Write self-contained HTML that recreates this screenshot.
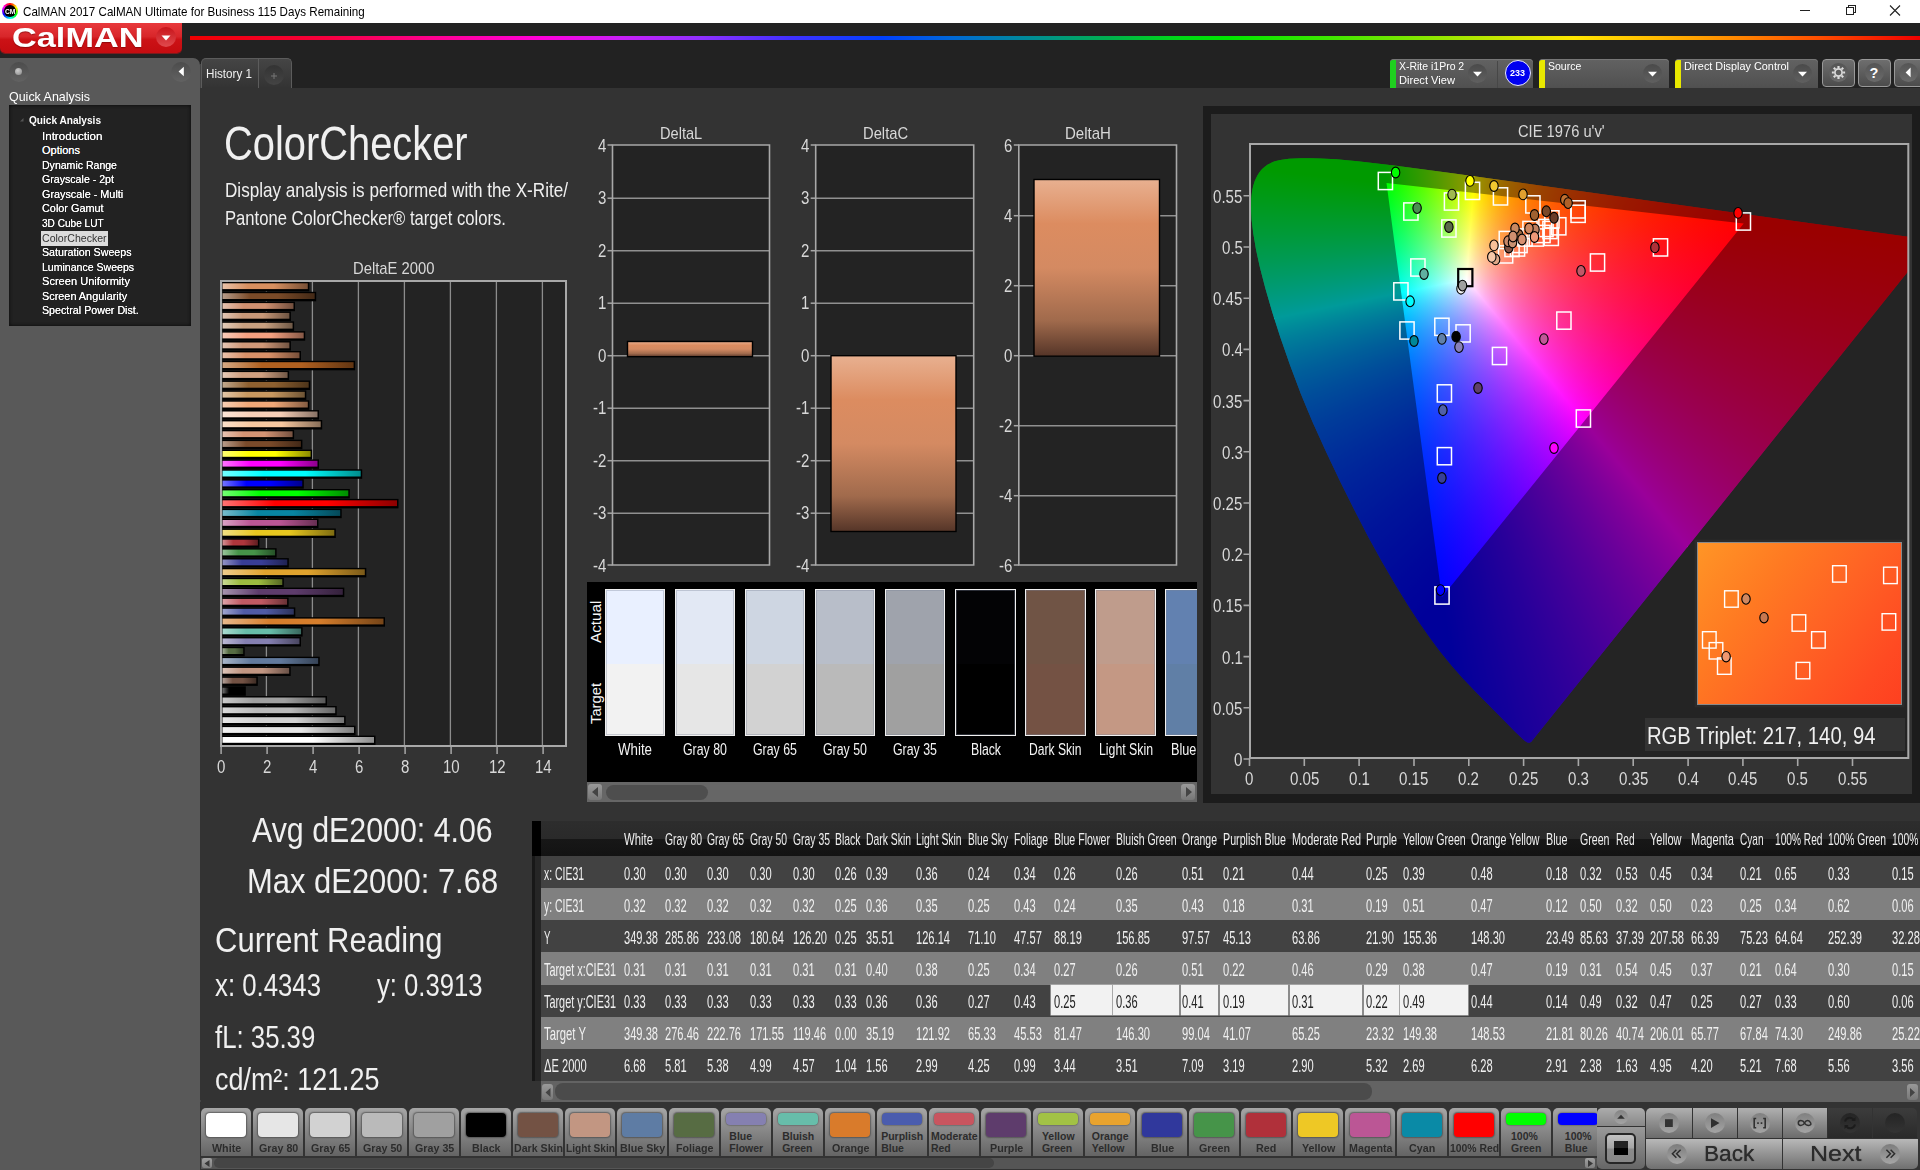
<!DOCTYPE html>
<html><head><meta charset="utf-8"><title>CalMAN</title>
<style>
html,body{margin:0;padding:0}
body{width:1920px;height:1170px;position:relative;overflow:hidden;background:#333;font-family:"Liberation Sans",sans-serif}
.t{position:absolute;white-space:nowrap;line-height:1;transform-origin:0 0}
</style></head><body>
<div style="position:absolute;left:0;top:0;width:1920px;height:23px;background:#fff"></div>
<div style="position:absolute;left:2px;top:3px;width:16px;height:16px;border-radius:50%;background:conic-gradient(from 0deg,#f00,#ff0,#0f0,#0ff,#00f,#f0f,#f00)"></div>
<div style="position:absolute;left:4px;top:5px;width:12px;height:12px;border-radius:50%;background:#000"></div>
<div class="t" style="left:4.9px;top:7.9px;font-size:7px;color:#fff;font-weight:bold;transform:scaleX(0.955);">CM</div>
<div class="t" style="left:23.4px;top:5.6px;font-size:12.4px;color:#000;transform:scaleX(0.937);">CalMAN 2017 CalMAN Ultimate for Business 115 Days Remaining</div>
<svg style="position:absolute;left:1780px;top:0" width="140" height="23"><g stroke="#222" stroke-width="1" fill="none" shape-rendering="crispEdges"><path d="M19.5 10.5H29.5"/><path d="M66.5 7.5H73.5V14.5H66.5Z M68.5 7.5V5.5H75.5V12.5H73.5"/></g><path d="M110 5.5L120 15.5M120 5.5L110 15.5" stroke="#222" stroke-width="1.1" fill="none"/></svg>
<div style="position:absolute;left:0;top:23px;width:1920px;height:65px;background:#222"></div>
<div style="position:absolute;left:190px;top:35.600px;width:1730px;height:4.800px;background:linear-gradient(90deg,#f00000 0%,#f80040 8%,#ff0090 14%,#ff00dc 20.400%,#c820f8 25%,#9030ff 29.500%,#4030ff 34.700%,#0040ff 40%,#0068d8 44%,#009090 49%,#00b050 53%,#00d818 57%,#00e600 60%,#40e800 66%,#90e800 72%,#d8e800 77%,#ffe600 80%,#ffb800 85%,#ff8c00 89%,#ff5000 94%,#f00000 100%);filter:blur(.5px)"></div>
<div style="position:absolute;left:0;top:23px;width:182px;height:29.5px;border-radius:0 0 5px 5px;background:linear-gradient(#e8393c,#d8262a 45%,#cc1216 55%,#c40c10);box-shadow:0 1px 0 #7a1a1c"></div>
<div class="t" style="left:11.8px;top:23.7px;font-size:28px;color:#fff;font-weight:bold;transform:scaleX(1.225);text-shadow:0 1px 1px rgba(90,0,0,.5);">CalMAN</div>
<div style="position:absolute;left:156px;top:27px;width:20px;height:20px;border-radius:50%;background:linear-gradient(#c8141a,#e04a4e)"></div>
<svg style="position:absolute;left:156px;top:27px" width="20" height="20"><path d="M5.5 8.5H14.5L10 13.5Z" fill="#fff"/></svg>
<div style="position:absolute;left:0;top:58px;width:199.5px;height:1112px;background:#595959;border-radius:0 7px 0 0"></div>
<div style="position:absolute;left:199.5px;top:64px;width:1px;height:1106px;background:#444"></div>
<div style="position:absolute;left:9px;top:62px;width:20px;height:20px;border-radius:50%;background:linear-gradient(#4c4c4c,#626262)"></div>
<div style="position:absolute;left:15px;top:68px;width:7px;height:7px;border-radius:50%;background:radial-gradient(circle at 40% 35%,#ccc,#888)"></div>
<div style="position:absolute;left:171px;top:62px;width:20px;height:20px;border-radius:50%;background:linear-gradient(#4c4c4c,#626262)"></div>
<svg style="position:absolute;left:171px;top:62px" width="20" height="20"><path d="M12.8 4.8V14.2L7.6 9.5Z" fill="#fff"/></svg>
<div class="t" style="left:9.0px;top:89.9px;font-size:13px;color:#fff;transform:scaleX(0.958);">Quick Analysis</div>
<div style="position:absolute;left:9px;top:105px;width:182px;height:221px;background:#222;box-shadow:inset 0 0 3px 1px #111"></div>
<svg style="position:absolute;left:18px;top:116px" width="8" height="8"><path d="M5.5 2V5.5H2Z" fill="#555"/></svg>
<div class="t" style="left:29.0px;top:115.1px;font-size:11px;color:#fff;font-weight:bold;transform:scaleX(0.918);">Quick Analysis</div>
<div class="t" style="left:42.0px;top:130.5px;font-size:11px;color:#fff;transform:scaleX(1.051);text-shadow:0 0 .6px #fff;">Introduction</div>
<div class="t" style="left:42.0px;top:145.1px;font-size:11px;color:#fff;text-shadow:0 0 .6px #fff;">Options</div>
<div class="t" style="left:42.0px;top:159.6px;font-size:11px;color:#fff;transform:scaleX(0.958);text-shadow:0 0 .6px #fff;">Dynamic Range</div>
<div class="t" style="left:42.0px;top:174.2px;font-size:11px;color:#fff;transform:scaleX(0.965);text-shadow:0 0 .6px #fff;">Grayscale - 2pt</div>
<div class="t" style="left:42.0px;top:188.8px;font-size:11px;color:#fff;transform:scaleX(0.984);text-shadow:0 0 .6px #fff;">Grayscale - Multi</div>
<div class="t" style="left:42.0px;top:203.4px;font-size:11px;color:#fff;transform:scaleX(0.988);text-shadow:0 0 .6px #fff;">Color Gamut</div>
<div class="t" style="left:42.0px;top:218.0px;font-size:11px;color:#fff;transform:scaleX(0.916);text-shadow:0 0 .6px #fff;">3D Cube LUT</div>
<div style="position:absolute;left:40.5px;top:231.3px;width:67px;height:14.5px;background:#dcdcdc"></div>
<div class="t" style="left:42.0px;top:232.5px;font-size:11px;color:#333;transform:scaleX(0.961);">ColorChecker</div>
<div class="t" style="left:42.0px;top:247.1px;font-size:11px;color:#fff;transform:scaleX(0.970);text-shadow:0 0 .6px #fff;">Saturation Sweeps</div>
<div class="t" style="left:42.0px;top:261.7px;font-size:11px;color:#fff;transform:scaleX(0.959);text-shadow:0 0 .6px #fff;">Luminance Sweeps</div>
<div class="t" style="left:42.0px;top:276.3px;font-size:11px;color:#fff;transform:scaleX(1.006);text-shadow:0 0 .6px #fff;">Screen Uniformity</div>
<div class="t" style="left:42.0px;top:290.9px;font-size:11px;color:#fff;transform:scaleX(0.988);text-shadow:0 0 .6px #fff;">Screen Angularity</div>
<div class="t" style="left:42.0px;top:305.4px;font-size:11px;color:#fff;transform:scaleX(0.971);text-shadow:0 0 .6px #fff;">Spectral Power Dist.</div>
<div style="position:absolute;left:200.5px;top:58px;width:91px;height:30px;border-radius:5px 5px 0 0;background:linear-gradient(#454545,#333);border:1px solid #5c5c5c;border-bottom:none;box-sizing:border-box"></div>
<div style="position:absolute;left:258px;top:59px;width:1px;height:29px;background:#5c5c5c"></div>
<div class="t" style="left:206.4px;top:67.6px;font-size:12px;color:#f0f0f0;transform:scaleX(0.972);">History 1</div>
<div style="position:absolute;left:264px;top:64.5px;width:20px;height:20px;border-radius:50%;background:linear-gradient(#333,#444)"></div>
<svg style="position:absolute;left:264px;top:64.5px" width="20" height="20"><path d="M7 11H13M10 8V14" stroke="#777" stroke-width="1" fill="none"/></svg>
<div style="position:absolute;left:1390.0px;top:58.5px;width:142.5px;height:29.5px;border-radius:4px 4px 0 0;background:linear-gradient(#626262,#505050);box-shadow:inset 0 1px 0 #777"></div>
<div style="position:absolute;left:1390.0px;top:59.5px;width:5.5px;height:28.5px;background:#1fd01f;border-radius:3px 0 0 0"></div>
<div class="t" style="left:1398.6px;top:61.3px;font-size:11px;color:#fff;transform:scaleX(0.952);">X-Rite i1Pro 2</div>
<div class="t" style="left:1398.6px;top:74.9px;font-size:11px;color:#fff;transform:scaleX(1.010);">Direct View</div>
<div style="position:absolute;left:1467.5px;top:63.5px;width:19px;height:19px;border-radius:50%;background:linear-gradient(#4a4a4a,#606060)"></div>
<svg style="position:absolute;left:1467.5px;top:63.5px" width="19" height="19"><path d="M5 7.8H14L9.5 12.6Z" fill="#fff"/></svg>
<div style="position:absolute;left:1496.5px;top:61px;width:1.5px;height:27px;background:#474747"></div>
<div style="position:absolute;left:1504.5px;top:60px;width:26px;height:26px;border-radius:50%;background:#0000f0;border:1.5px solid #e8e8ff;box-sizing:border-box"></div>
<div class="t" style="left:1510.1px;top:68.3px;font-size:9.5px;color:#fff;font-weight:bold;transform:scaleX(0.946);">233</div>
<div style="position:absolute;left:1539.0px;top:58.5px;width:130.0px;height:29.5px;border-radius:4px 4px 0 0;background:linear-gradient(#626262,#505050);box-shadow:inset 0 1px 0 #777"></div>
<div style="position:absolute;left:1539.0px;top:59.5px;width:5.5px;height:28.5px;background:#e8e800;border-radius:3px 0 0 0"></div>
<div class="t" style="left:1547.6px;top:61.3px;font-size:11px;color:#fff;transform:scaleX(0.955);">Source</div>
<div style="position:absolute;left:1642.5px;top:63.5px;width:19px;height:19px;border-radius:50%;background:linear-gradient(#4a4a4a,#606060)"></div>
<svg style="position:absolute;left:1642.5px;top:63.5px" width="19" height="19"><path d="M5 7.8H14L9.5 12.6Z" fill="#fff"/></svg>
<div style="position:absolute;left:1675.0px;top:58.5px;width:143.0px;height:29.5px;border-radius:4px 4px 0 0;background:linear-gradient(#626262,#505050);box-shadow:inset 0 1px 0 #777"></div>
<div style="position:absolute;left:1675.0px;top:59.5px;width:5.5px;height:28.5px;background:#e8e800;border-radius:3px 0 0 0"></div>
<div class="t" style="left:1683.6px;top:61.3px;font-size:11px;color:#fff;transform:scaleX(0.987);">Direct Display Control</div>
<div style="position:absolute;left:1792.5px;top:63.5px;width:19px;height:19px;border-radius:50%;background:linear-gradient(#4a4a4a,#606060)"></div>
<svg style="position:absolute;left:1792.5px;top:63.5px" width="19" height="19"><path d="M5 7.8H14L9.5 12.6Z" fill="#fff"/></svg>
<div style="position:absolute;left:1821.5px;top:58.5px;width:33px;height:28px;border-radius:4px;background:linear-gradient(#6e6e6e,#4c4c4c);border:1px solid #999;box-sizing:border-box"></div>
<div style="position:absolute;left:1828.5px;top:63px;width:19px;height:19px;border-radius:50%;background:linear-gradient(#555,#6a6a6a)"></div>
<div style="position:absolute;left:1857.5px;top:58.5px;width:33px;height:28px;border-radius:4px;background:linear-gradient(#6e6e6e,#4c4c4c);border:1px solid #999;box-sizing:border-box"></div>
<div style="position:absolute;left:1864.5px;top:63px;width:19px;height:19px;border-radius:50%;background:linear-gradient(#555,#6a6a6a)"></div>
<div style="position:absolute;left:1893.5px;top:58.5px;width:33px;height:28px;border-radius:4px;background:linear-gradient(#6e6e6e,#4c4c4c);border:1px solid #999;box-sizing:border-box"></div>
<div style="position:absolute;left:1898.5px;top:63px;width:19px;height:19px;border-radius:50%;background:linear-gradient(#555,#6a6a6a)"></div>
<svg style="position:absolute;left:1828.5px;top:63px" width="19" height="19" viewBox="-9.5 -9.5 19 19"><g fill="none" stroke="#ddd"><circle r="3.6" stroke-width="1.7"/><g stroke-width="2.2"><path d="M0 -4.6V-6.6M0 4.6V6.6M-4.6 0H-6.6M4.6 0H6.6M3.25 3.25L4.7 4.7M-3.25 3.25L-4.7 4.7M3.25 -3.25L4.7 -4.7M-3.25 -3.25L-4.7 -4.7"/></g></g></svg>
<div class="t" style="left:1869.6px;top:65.7px;font-size:14.5px;color:#fff;font-weight:bold;">?</div>
<svg style="position:absolute;left:1898.5px;top:63px" width="19" height="19"><path d="M11.6 4.6V14.2L6.6 9.4Z" fill="#fff"/></svg>
<div style="position:absolute;left:200px;top:88px;width:1720px;height:1012px;background:#333"></div>
<div class="t" style="left:224.3px;top:120.2px;font-size:47.5px;color:#f0f0f0;transform:scaleX(0.839);">ColorChecker</div>
<div class="t" style="left:225.0px;top:179.3px;font-size:21px;color:#f0f0f0;transform:scaleX(0.814);">Display analysis is performed with the X-Rite/</div>
<div class="t" style="left:225.0px;top:207.4px;font-size:21px;color:#f0f0f0;transform:scaleX(0.791);">Pantone ColorChecker® target colors.</div>
<div class="t" style="left:353.2px;top:260.3px;font-size:17px;color:#d8d8d8;transform:scaleX(0.871);">DeltaE 2000</div>
<div style="position:absolute;left:221px;top:281px;width:346px;height:465px;background:#232323"></div>
<svg style="position:absolute;left:200px;top:270px" width="400" height="490">
<defs>
<linearGradient id="g0"><stop offset="0" stop-color="rgb(255,255,255)"/><stop offset=".3" stop-color="rgb(255,255,255)"/><stop offset=".6" stop-color="rgb(255,255,255)"/><stop offset="1" stop-color="rgb(140,140,140)"/></linearGradient>
<linearGradient id="g1"><stop offset="0" stop-color="rgb(241,241,241)"/><stop offset=".3" stop-color="rgb(230,230,230)"/><stop offset=".6" stop-color="rgb(230,230,230)"/><stop offset="1" stop-color="rgb(126,126,126)"/></linearGradient>
<linearGradient id="g2"><stop offset="0" stop-color="rgb(230,230,230)"/><stop offset=".3" stop-color="rgb(210,210,210)"/><stop offset=".6" stop-color="rgb(210,210,210)"/><stop offset="1" stop-color="rgb(116,116,116)"/></linearGradient>
<linearGradient id="g3"><stop offset="0" stop-color="rgb(217,217,217)"/><stop offset=".3" stop-color="rgb(186,186,186)"/><stop offset=".6" stop-color="rgb(186,186,186)"/><stop offset="1" stop-color="rgb(102,102,102)"/></linearGradient>
<linearGradient id="g4"><stop offset="0" stop-color="rgb(203,203,203)"/><stop offset=".3" stop-color="rgb(160,160,160)"/><stop offset=".6" stop-color="rgb(160,160,160)"/><stop offset="1" stop-color="rgb(88,88,88)"/></linearGradient>
<linearGradient id="g5"><stop offset="0" stop-color="rgb(115,115,115)"/><stop offset=".3" stop-color="rgb(0,0,0)"/><stop offset=".6" stop-color="rgb(0,0,0)"/><stop offset="1" stop-color="rgb(0,0,0)"/></linearGradient>
<linearGradient id="g6"><stop offset="0" stop-color="rgb(178,160,152)"/><stop offset=".3" stop-color="rgb(115,82,68)"/><stop offset=".6" stop-color="rgb(115,82,68)"/><stop offset="1" stop-color="rgb(63,45,37)"/></linearGradient>
<linearGradient id="g7"><stop offset="0" stop-color="rgb(221,197,186)"/><stop offset=".3" stop-color="rgb(194,150,130)"/><stop offset=".6" stop-color="rgb(194,150,130)"/><stop offset="1" stop-color="rgb(107,82,72)"/></linearGradient>
<linearGradient id="g8"><stop offset="0" stop-color="rgb(169,182,201)"/><stop offset=".3" stop-color="rgb(98,122,157)"/><stop offset=".6" stop-color="rgb(98,122,157)"/><stop offset="1" stop-color="rgb(54,67,86)"/></linearGradient>
<linearGradient id="g9"><stop offset="0" stop-color="rgb(163,174,152)"/><stop offset=".3" stop-color="rgb(87,108,67)"/><stop offset=".6" stop-color="rgb(87,108,67)"/><stop offset="1" stop-color="rgb(48,59,37)"/></linearGradient>
<linearGradient id="g10"><stop offset="0" stop-color="rgb(188,185,212)"/><stop offset=".3" stop-color="rgb(133,128,177)"/><stop offset=".6" stop-color="rgb(133,128,177)"/><stop offset="1" stop-color="rgb(73,70,97)"/></linearGradient>
<linearGradient id="g11"><stop offset="0" stop-color="rgb(171,219,208)"/><stop offset=".3" stop-color="rgb(103,189,170)"/><stop offset=".6" stop-color="rgb(103,189,170)"/><stop offset="1" stop-color="rgb(57,104,94)"/></linearGradient>
<linearGradient id="g12"><stop offset="0" stop-color="rgb(232,184,139)"/><stop offset=".3" stop-color="rgb(214,126,44)"/><stop offset=".6" stop-color="rgb(214,126,44)"/><stop offset="1" stop-color="rgb(118,69,24)"/></linearGradient>
<linearGradient id="g13"><stop offset="0" stop-color="rgb(159,165,206)"/><stop offset=".3" stop-color="rgb(80,91,166)"/><stop offset=".6" stop-color="rgb(80,91,166)"/><stop offset="1" stop-color="rgb(44,50,91)"/></linearGradient>
<linearGradient id="g14"><stop offset="0" stop-color="rgb(221,164,169)"/><stop offset=".3" stop-color="rgb(193,90,99)"/><stop offset=".6" stop-color="rgb(193,90,99)"/><stop offset="1" stop-color="rgb(106,50,54)"/></linearGradient>
<linearGradient id="g15"><stop offset="0" stop-color="rgb(166,148,174)"/><stop offset=".3" stop-color="rgb(94,60,108)"/><stop offset=".6" stop-color="rgb(94,60,108)"/><stop offset="1" stop-color="rgb(52,33,59)"/></linearGradient>
<linearGradient id="g16"><stop offset="0" stop-color="rgb(201,218,150)"/><stop offset=".3" stop-color="rgb(157,188,64)"/><stop offset=".6" stop-color="rgb(157,188,64)"/><stop offset="1" stop-color="rgb(86,103,35)"/></linearGradient>
<linearGradient id="g17"><stop offset="0" stop-color="rgb(238,204,140)"/><stop offset=".3" stop-color="rgb(224,163,46)"/><stop offset=".6" stop-color="rgb(224,163,46)"/><stop offset="1" stop-color="rgb(123,90,25)"/></linearGradient>
<linearGradient id="g18"><stop offset="0" stop-color="rgb(146,148,197)"/><stop offset=".3" stop-color="rgb(56,61,150)"/><stop offset=".6" stop-color="rgb(56,61,150)"/><stop offset="1" stop-color="rgb(31,34,82)"/></linearGradient>
<linearGradient id="g19"><stop offset="0" stop-color="rgb(153,196,155)"/><stop offset=".3" stop-color="rgb(70,148,73)"/><stop offset=".6" stop-color="rgb(70,148,73)"/><stop offset="1" stop-color="rgb(38,81,40)"/></linearGradient>
<linearGradient id="g20"><stop offset="0" stop-color="rgb(211,144,148)"/><stop offset=".3" stop-color="rgb(175,54,60)"/><stop offset=".6" stop-color="rgb(175,54,60)"/><stop offset="1" stop-color="rgb(96,30,33)"/></linearGradient>
<linearGradient id="g21"><stop offset="0" stop-color="rgb(242,224,132)"/><stop offset=".3" stop-color="rgb(231,199,31)"/><stop offset=".6" stop-color="rgb(231,199,31)"/><stop offset="1" stop-color="rgb(127,109,17)"/></linearGradient>
<linearGradient id="g22"><stop offset="0" stop-color="rgb(218,162,197)"/><stop offset=".3" stop-color="rgb(187,86,149)"/><stop offset=".6" stop-color="rgb(187,86,149)"/><stop offset="1" stop-color="rgb(103,47,82)"/></linearGradient>
<linearGradient id="g23"><stop offset="0" stop-color="rgb(119,188,203)"/><stop offset=".3" stop-color="rgb(8,133,161)"/><stop offset=".6" stop-color="rgb(8,133,161)"/><stop offset="1" stop-color="rgb(4,73,89)"/></linearGradient>
<linearGradient id="g24"><stop offset="0" stop-color="rgb(255,115,115)"/><stop offset=".3" stop-color="rgb(255,0,0)"/><stop offset=".6" stop-color="rgb(255,0,0)"/><stop offset="1" stop-color="rgb(140,0,0)"/></linearGradient>
<linearGradient id="g25"><stop offset="0" stop-color="rgb(115,255,115)"/><stop offset=".3" stop-color="rgb(0,255,0)"/><stop offset=".6" stop-color="rgb(0,255,0)"/><stop offset="1" stop-color="rgb(0,140,0)"/></linearGradient>
<linearGradient id="g26"><stop offset="0" stop-color="rgb(115,115,255)"/><stop offset=".3" stop-color="rgb(0,0,255)"/><stop offset=".6" stop-color="rgb(0,0,255)"/><stop offset="1" stop-color="rgb(0,0,140)"/></linearGradient>
<linearGradient id="g27"><stop offset="0" stop-color="rgb(115,255,255)"/><stop offset=".3" stop-color="rgb(0,255,255)"/><stop offset=".6" stop-color="rgb(0,255,255)"/><stop offset="1" stop-color="rgb(0,140,140)"/></linearGradient>
<linearGradient id="g28"><stop offset="0" stop-color="rgb(255,115,255)"/><stop offset=".3" stop-color="rgb(255,0,255)"/><stop offset=".6" stop-color="rgb(255,0,255)"/><stop offset="1" stop-color="rgb(140,0,140)"/></linearGradient>
<linearGradient id="g29"><stop offset="0" stop-color="rgb(255,255,115)"/><stop offset=".3" stop-color="rgb(255,255,0)"/><stop offset=".6" stop-color="rgb(255,255,0)"/><stop offset="1" stop-color="rgb(140,140,0)"/></linearGradient>
<linearGradient id="g30"><stop offset="0" stop-color="rgb(182,155,138)"/><stop offset=".3" stop-color="rgb(122,74,42)"/><stop offset=".6" stop-color="rgb(122,74,42)"/><stop offset="1" stop-color="rgb(67,41,23)"/></linearGradient>
<linearGradient id="g31"><stop offset="0" stop-color="rgb(231,196,179)"/><stop offset=".3" stop-color="rgb(212,148,116)"/><stop offset=".6" stop-color="rgb(212,148,116)"/><stop offset="1" stop-color="rgb(117,81,64)"/></linearGradient>
<linearGradient id="g32"><stop offset="0" stop-color="rgb(251,225,203)"/><stop offset=".3" stop-color="rgb(248,200,160)"/><stop offset=".6" stop-color="rgb(248,200,160)"/><stop offset="1" stop-color="rgb(136,110,88)"/></linearGradient>
<linearGradient id="g33"><stop offset="0" stop-color="rgb(251,229,216)"/><stop offset=".3" stop-color="rgb(248,208,184)"/><stop offset=".6" stop-color="rgb(248,208,184)"/><stop offset="1" stop-color="rgb(136,114,101)"/></linearGradient>
<linearGradient id="g34"><stop offset="0" stop-color="rgb(247,207,181)"/><stop offset=".3" stop-color="rgb(240,168,120)"/><stop offset=".6" stop-color="rgb(240,168,120)"/><stop offset="1" stop-color="rgb(132,92,66)"/></linearGradient>
<linearGradient id="g35"><stop offset="0" stop-color="rgb(225,198,168)"/><stop offset=".3" stop-color="rgb(200,152,96)"/><stop offset=".6" stop-color="rgb(200,152,96)"/><stop offset="1" stop-color="rgb(110,84,53)"/></linearGradient>
<linearGradient id="g36"><stop offset="0" stop-color="rgb(193,168,141)"/><stop offset=".3" stop-color="rgb(142,96,48)"/><stop offset=".6" stop-color="rgb(142,96,48)"/><stop offset="1" stop-color="rgb(78,53,26)"/></linearGradient>
<linearGradient id="g37"><stop offset="0" stop-color="rgb(229,203,185)"/><stop offset=".3" stop-color="rgb(208,160,128)"/><stop offset=".6" stop-color="rgb(208,160,128)"/><stop offset="1" stop-color="rgb(114,88,70)"/></linearGradient>
<linearGradient id="g38"><stop offset="0" stop-color="rgb(212,168,132)"/><stop offset=".3" stop-color="rgb(176,96,32)"/><stop offset=".6" stop-color="rgb(176,96,32)"/><stop offset="1" stop-color="rgb(97,53,18)"/></linearGradient>
<linearGradient id="g39"><stop offset="0" stop-color="rgb(234,194,172)"/><stop offset=".3" stop-color="rgb(216,144,104)"/><stop offset=".6" stop-color="rgb(216,144,104)"/><stop offset="1" stop-color="rgb(119,79,57)"/></linearGradient>
<linearGradient id="g40"><stop offset="0" stop-color="rgb(229,198,181)"/><stop offset=".3" stop-color="rgb(208,152,120)"/><stop offset=".6" stop-color="rgb(208,152,120)"/><stop offset="1" stop-color="rgb(114,84,66)"/></linearGradient>
<linearGradient id="g41"><stop offset="0" stop-color="rgb(249,203,185)"/><stop offset=".3" stop-color="rgb(244,160,128)"/><stop offset=".6" stop-color="rgb(244,160,128)"/><stop offset="1" stop-color="rgb(134,88,70)"/></linearGradient>
<linearGradient id="g42"><stop offset="0" stop-color="rgb(225,203,185)"/><stop offset=".3" stop-color="rgb(200,160,128)"/><stop offset=".6" stop-color="rgb(200,160,128)"/><stop offset="1" stop-color="rgb(110,88,70)"/></linearGradient>
<linearGradient id="g43"><stop offset="0" stop-color="rgb(225,198,181)"/><stop offset=".3" stop-color="rgb(200,152,120)"/><stop offset=".6" stop-color="rgb(200,152,120)"/><stop offset="1" stop-color="rgb(110,84,66)"/></linearGradient>
<linearGradient id="g44"><stop offset="0" stop-color="rgb(229,194,176)"/><stop offset=".3" stop-color="rgb(208,144,112)"/><stop offset=".6" stop-color="rgb(208,144,112)"/><stop offset="1" stop-color="rgb(114,79,62)"/></linearGradient>
<linearGradient id="g45"><stop offset="0" stop-color="rgb(182,155,137)"/><stop offset=".3" stop-color="rgb(122,74,40)"/><stop offset=".6" stop-color="rgb(122,74,40)"/><stop offset="1" stop-color="rgb(67,41,22)"/></linearGradient>
<linearGradient id="g46"><stop offset="0" stop-color="rgb(234,194,168)"/><stop offset=".3" stop-color="rgb(216,144,96)"/><stop offset=".6" stop-color="rgb(216,144,96)"/><stop offset="1" stop-color="rgb(119,79,53)"/></linearGradient>
</defs>
<path d="M66.4 11 V476" stroke="#8c8c8c" stroke-width="1.3"/>
<path d="M112.4 11 V476" stroke="#8c8c8c" stroke-width="1.3"/>
<path d="M158.4 11 V476" stroke="#8c8c8c" stroke-width="1.3"/>
<path d="M204.4 11 V476" stroke="#8c8c8c" stroke-width="1.3"/>
<path d="M250.4 11 V476" stroke="#8c8c8c" stroke-width="1.3"/>
<path d="M296.4 11 V476" stroke="#8c8c8c" stroke-width="1.3"/>
<path d="M342.4 11 V476" stroke="#8c8c8c" stroke-width="1.3"/>
<rect x="22.5" y="465.6" width="153.0" height="9.5" fill="#000"/>
<rect x="22.5" y="467.0" width="151.5" height="5.8" fill="url(#g0)"/>
<rect x="22.5" y="455.7" width="133.0" height="9.5" fill="#000"/>
<rect x="22.5" y="457.1" width="131.5" height="5.8" fill="url(#g1)"/>
<rect x="22.5" y="445.8" width="123.1" height="9.5" fill="#000"/>
<rect x="22.5" y="447.2" width="121.6" height="5.8" fill="url(#g2)"/>
<rect x="22.5" y="436.0" width="114.2" height="9.5" fill="#000"/>
<rect x="22.5" y="437.4" width="112.7" height="5.8" fill="url(#g3)"/>
<rect x="22.5" y="426.1" width="104.5" height="9.5" fill="#000"/>
<rect x="22.5" y="427.5" width="103.0" height="5.8" fill="url(#g4)"/>
<rect x="22.5" y="416.3" width="23.3" height="9.5" fill="#000"/>
<rect x="22.5" y="417.7" width="21.8" height="5.8" fill="url(#g5)"/>
<rect x="22.5" y="406.4" width="35.3" height="9.5" fill="#000"/>
<rect x="22.5" y="407.8" width="33.8" height="5.8" fill="url(#g6)"/>
<rect x="22.5" y="396.5" width="68.2" height="9.5" fill="#000"/>
<rect x="22.5" y="397.9" width="66.7" height="5.8" fill="url(#g7)"/>
<rect x="22.5" y="386.7" width="97.2" height="9.5" fill="#000"/>
<rect x="22.5" y="388.1" width="95.7" height="5.8" fill="url(#g8)"/>
<rect x="22.5" y="376.8" width="22.2" height="9.5" fill="#000"/>
<rect x="22.5" y="378.2" width="20.7" height="5.8" fill="url(#g9)"/>
<rect x="22.5" y="367.0" width="78.5" height="9.5" fill="#000"/>
<rect x="22.5" y="368.4" width="77.0" height="5.8" fill="url(#g10)"/>
<rect x="22.5" y="357.1" width="80.1" height="9.5" fill="#000"/>
<rect x="22.5" y="358.5" width="78.6" height="5.8" fill="url(#g11)"/>
<rect x="22.5" y="347.2" width="162.5" height="9.5" fill="#000"/>
<rect x="22.5" y="348.6" width="161.0" height="5.8" fill="url(#g12)"/>
<rect x="22.5" y="337.4" width="72.8" height="9.5" fill="#000"/>
<rect x="22.5" y="338.8" width="71.3" height="5.8" fill="url(#g13)"/>
<rect x="22.5" y="327.5" width="66.1" height="9.5" fill="#000"/>
<rect x="22.5" y="328.9" width="64.6" height="5.8" fill="url(#g14)"/>
<rect x="22.5" y="317.6" width="121.8" height="9.5" fill="#000"/>
<rect x="22.5" y="319.0" width="120.3" height="5.8" fill="url(#g15)"/>
<rect x="22.5" y="307.8" width="61.3" height="9.5" fill="#000"/>
<rect x="22.5" y="309.2" width="59.8" height="5.8" fill="url(#g16)"/>
<rect x="22.5" y="297.9" width="143.8" height="9.5" fill="#000"/>
<rect x="22.5" y="299.3" width="142.3" height="5.8" fill="url(#g17)"/>
<rect x="22.5" y="288.1" width="66.3" height="9.5" fill="#000"/>
<rect x="22.5" y="289.5" width="64.8" height="5.8" fill="url(#g18)"/>
<rect x="22.5" y="278.2" width="54.1" height="9.5" fill="#000"/>
<rect x="22.5" y="279.6" width="52.6" height="5.8" fill="url(#g19)"/>
<rect x="22.5" y="268.3" width="36.9" height="9.5" fill="#000"/>
<rect x="22.5" y="269.7" width="35.4" height="5.8" fill="url(#g20)"/>
<rect x="22.5" y="258.5" width="113.3" height="9.5" fill="#000"/>
<rect x="22.5" y="259.9" width="111.8" height="5.8" fill="url(#g21)"/>
<rect x="22.5" y="248.6" width="96.0" height="9.5" fill="#000"/>
<rect x="22.5" y="250.0" width="94.5" height="5.8" fill="url(#g22)"/>
<rect x="22.5" y="238.7" width="119.2" height="9.5" fill="#000"/>
<rect x="22.5" y="240.1" width="117.7" height="5.8" fill="url(#g23)"/>
<rect x="22.5" y="228.9" width="176.0" height="9.5" fill="#000"/>
<rect x="22.5" y="230.3" width="174.5" height="5.8" fill="url(#g24)"/>
<rect x="22.5" y="219.0" width="127.3" height="9.5" fill="#000"/>
<rect x="22.5" y="220.4" width="125.8" height="5.8" fill="url(#g25)"/>
<rect x="22.5" y="209.2" width="81.3" height="9.5" fill="#000"/>
<rect x="22.5" y="210.6" width="79.8" height="5.8" fill="url(#g26)"/>
<rect x="22.5" y="199.3" width="139.7" height="9.5" fill="#000"/>
<rect x="22.5" y="200.7" width="138.2" height="5.8" fill="url(#g27)"/>
<rect x="22.5" y="189.4" width="96.5" height="9.5" fill="#000"/>
<rect x="22.5" y="190.8" width="95.0" height="5.8" fill="url(#g28)"/>
<rect x="22.5" y="179.6" width="89.6" height="9.5" fill="#000"/>
<rect x="22.5" y="181.0" width="88.1" height="5.8" fill="url(#g29)"/>
<rect x="22.5" y="169.7" width="79.9" height="9.5" fill="#000"/>
<rect x="22.5" y="171.1" width="78.4" height="5.8" fill="url(#g30)"/>
<rect x="22.5" y="159.9" width="71.6" height="9.5" fill="#000"/>
<rect x="22.5" y="161.3" width="70.1" height="5.8" fill="url(#g31)"/>
<rect x="22.5" y="150.0" width="99.7" height="9.5" fill="#000"/>
<rect x="22.5" y="151.4" width="98.2" height="5.8" fill="url(#g32)"/>
<rect x="22.5" y="140.1" width="96.5" height="9.5" fill="#000"/>
<rect x="22.5" y="141.5" width="95.0" height="5.8" fill="url(#g33)"/>
<rect x="22.5" y="130.3" width="86.8" height="9.5" fill="#000"/>
<rect x="22.5" y="131.7" width="85.3" height="5.8" fill="url(#g34)"/>
<rect x="22.5" y="120.4" width="83.8" height="9.5" fill="#000"/>
<rect x="22.5" y="121.8" width="82.3" height="5.8" fill="url(#g35)"/>
<rect x="22.5" y="110.5" width="87.7" height="9.5" fill="#000"/>
<rect x="22.5" y="111.9" width="86.2" height="5.8" fill="url(#g36)"/>
<rect x="22.5" y="100.7" width="66.6" height="9.5" fill="#000"/>
<rect x="22.5" y="102.1" width="65.1" height="5.8" fill="url(#g37)"/>
<rect x="22.5" y="90.8" width="132.6" height="9.5" fill="#000"/>
<rect x="22.5" y="92.2" width="131.1" height="5.8" fill="url(#g38)"/>
<rect x="22.5" y="81.0" width="78.5" height="9.5" fill="#000"/>
<rect x="22.5" y="82.4" width="77.0" height="5.8" fill="url(#g39)"/>
<rect x="22.5" y="71.1" width="68.4" height="9.5" fill="#000"/>
<rect x="22.5" y="72.5" width="66.9" height="5.8" fill="url(#g40)"/>
<rect x="22.5" y="61.2" width="82.7" height="9.5" fill="#000"/>
<rect x="22.5" y="62.6" width="81.2" height="5.8" fill="url(#g41)"/>
<rect x="22.5" y="51.4" width="71.6" height="9.5" fill="#000"/>
<rect x="22.5" y="52.8" width="70.1" height="5.8" fill="url(#g42)"/>
<rect x="22.5" y="41.5" width="68.4" height="9.5" fill="#000"/>
<rect x="22.5" y="42.9" width="66.9" height="5.8" fill="url(#g43)"/>
<rect x="22.5" y="31.7" width="72.5" height="9.5" fill="#000"/>
<rect x="22.5" y="33.1" width="71.0" height="5.8" fill="url(#g44)"/>
<rect x="22.5" y="21.8" width="93.7" height="9.5" fill="#000"/>
<rect x="22.5" y="23.2" width="92.2" height="5.8" fill="url(#g45)"/>
<rect x="22.5" y="11.9" width="86.8" height="9.5" fill="#000"/>
<rect x="22.5" y="13.3" width="85.3" height="5.8" fill="url(#g46)"/>
<path d="M21 11H366V476H21Z" fill="none" stroke="#a8a8a8" stroke-width="2"/>
<path d="M21.1 476 v8" stroke="#a8a8a8" stroke-width="1.5"/>
<path d="M67.1 476 v8" stroke="#a8a8a8" stroke-width="1.5"/>
<path d="M113.1 476 v8" stroke="#a8a8a8" stroke-width="1.5"/>
<path d="M159.1 476 v8" stroke="#a8a8a8" stroke-width="1.5"/>
<path d="M205.1 476 v8" stroke="#a8a8a8" stroke-width="1.5"/>
<path d="M251.1 476 v8" stroke="#a8a8a8" stroke-width="1.5"/>
<path d="M297.1 476 v8" stroke="#a8a8a8" stroke-width="1.5"/>
<path d="M343.1 476 v8" stroke="#a8a8a8" stroke-width="1.5"/>
</svg>
<div class="t" style="left:216.8px;top:757.9px;font-size:18px;color:#d8d8d8;transform:scaleX(0.835);">0</div>
<div class="t" style="left:262.8px;top:757.9px;font-size:18px;color:#d8d8d8;transform:scaleX(0.835);">2</div>
<div class="t" style="left:308.8px;top:757.9px;font-size:18px;color:#d8d8d8;transform:scaleX(0.835);">4</div>
<div class="t" style="left:354.8px;top:757.9px;font-size:18px;color:#d8d8d8;transform:scaleX(0.835);">6</div>
<div class="t" style="left:400.8px;top:757.9px;font-size:18px;color:#d8d8d8;transform:scaleX(0.835);">8</div>
<div class="t" style="left:442.6px;top:757.9px;font-size:18px;color:#d8d8d8;transform:scaleX(0.835);">10</div>
<div class="t" style="left:488.6px;top:757.9px;font-size:18px;color:#d8d8d8;transform:scaleX(0.835);">12</div>
<div class="t" style="left:534.6px;top:757.9px;font-size:18px;color:#d8d8d8;transform:scaleX(0.835);">14</div>
<div class="t" style="left:660.3px;top:124.6px;font-size:17px;color:#d8d8d8;transform:scaleX(0.859);">DeltaL</div>
<div style="position:absolute;left:612.5px;top:145px;width:157.0px;height:420px;background:#232323"></div>
<svg style="position:absolute;left:582px;top:130px" width="200" height="450">
<path d="M25.5 15.0h5" stroke="#a8a8a8" stroke-width="1.5"/>
<path d="M30.5 68.2H187.5" stroke="#909090" stroke-width="1.5"/>
<path d="M25.5 68.2h5" stroke="#a8a8a8" stroke-width="1.5"/>
<path d="M30.5 120.7H187.5" stroke="#909090" stroke-width="1.5"/>
<path d="M25.5 120.7h5" stroke="#a8a8a8" stroke-width="1.5"/>
<path d="M30.5 173.2H187.5" stroke="#909090" stroke-width="1.5"/>
<path d="M25.5 173.2h5" stroke="#a8a8a8" stroke-width="1.5"/>
<path d="M30.5 225.7H187.5" stroke="#909090" stroke-width="1.5"/>
<path d="M25.5 225.7h5" stroke="#a8a8a8" stroke-width="1.5"/>
<path d="M30.5 278.2H187.5" stroke="#909090" stroke-width="1.5"/>
<path d="M25.5 278.2h5" stroke="#a8a8a8" stroke-width="1.5"/>
<path d="M30.5 330.7H187.5" stroke="#909090" stroke-width="1.5"/>
<path d="M25.5 330.7h5" stroke="#a8a8a8" stroke-width="1.5"/>
<path d="M30.5 383.2H187.5" stroke="#909090" stroke-width="1.5"/>
<path d="M25.5 383.2h5" stroke="#a8a8a8" stroke-width="1.5"/>
<path d="M25.5 435.0h5" stroke="#a8a8a8" stroke-width="1.5"/>
<path d="M30.5 15H187.5V435H30.5Z" fill="none" stroke="#a8a8a8" stroke-width="1.6"/>
<defs><linearGradient id="dgDeltaL" x1="0" y1="0" x2="0" y2="1"><stop offset="0" stop-color="#e8b090"/><stop offset=".25" stop-color="#dc8c60"/><stop offset=".5" stop-color="#d48a62"/><stop offset=".8" stop-color="#a06a4c"/><stop offset="1" stop-color="#553528"/></linearGradient></defs>
<rect x="45.5" y="211.5" width="125.0" height="15.2" fill="url(#dgDeltaL)" stroke="#000" stroke-width="1.4"/>
</svg>
<div class="t" style="left:598.0px;top:136.7px;font-size:18px;color:#d8d8d8;transform:scaleX(0.835);">4</div>
<div class="t" style="left:598.0px;top:189.2px;font-size:18px;color:#d8d8d8;transform:scaleX(0.835);">3</div>
<div class="t" style="left:598.0px;top:241.7px;font-size:18px;color:#d8d8d8;transform:scaleX(0.835);">2</div>
<div class="t" style="left:598.0px;top:294.2px;font-size:18px;color:#d8d8d8;transform:scaleX(0.835);">1</div>
<div class="t" style="left:598.0px;top:346.7px;font-size:18px;color:#d8d8d8;transform:scaleX(0.835);">0</div>
<div class="t" style="left:593.0px;top:399.2px;font-size:18px;color:#d8d8d8;transform:scaleX(0.835);">-1</div>
<div class="t" style="left:593.0px;top:451.7px;font-size:18px;color:#d8d8d8;transform:scaleX(0.835);">-2</div>
<div class="t" style="left:593.0px;top:504.2px;font-size:18px;color:#d8d8d8;transform:scaleX(0.835);">-3</div>
<div class="t" style="left:593.0px;top:556.7px;font-size:18px;color:#d8d8d8;transform:scaleX(0.835);">-4</div>
<div class="t" style="left:862.5px;top:124.6px;font-size:17px;color:#d8d8d8;transform:scaleX(0.868);">DeltaC</div>
<div style="position:absolute;left:815.7px;top:145px;width:158.0px;height:420px;background:#232323"></div>
<svg style="position:absolute;left:785px;top:130px" width="200" height="450">
<path d="M25.7 15.0h5" stroke="#a8a8a8" stroke-width="1.5"/>
<path d="M30.7 68.2H188.7" stroke="#909090" stroke-width="1.5"/>
<path d="M25.7 68.2h5" stroke="#a8a8a8" stroke-width="1.5"/>
<path d="M30.7 120.7H188.7" stroke="#909090" stroke-width="1.5"/>
<path d="M25.7 120.7h5" stroke="#a8a8a8" stroke-width="1.5"/>
<path d="M30.7 173.2H188.7" stroke="#909090" stroke-width="1.5"/>
<path d="M25.7 173.2h5" stroke="#a8a8a8" stroke-width="1.5"/>
<path d="M30.7 225.7H188.7" stroke="#909090" stroke-width="1.5"/>
<path d="M25.7 225.7h5" stroke="#a8a8a8" stroke-width="1.5"/>
<path d="M30.7 278.2H188.7" stroke="#909090" stroke-width="1.5"/>
<path d="M25.7 278.2h5" stroke="#a8a8a8" stroke-width="1.5"/>
<path d="M30.7 330.7H188.7" stroke="#909090" stroke-width="1.5"/>
<path d="M25.7 330.7h5" stroke="#a8a8a8" stroke-width="1.5"/>
<path d="M30.7 383.2H188.7" stroke="#909090" stroke-width="1.5"/>
<path d="M25.7 383.2h5" stroke="#a8a8a8" stroke-width="1.5"/>
<path d="M25.7 435.0h5" stroke="#a8a8a8" stroke-width="1.5"/>
<path d="M30.7 15H188.7V435H30.7Z" fill="none" stroke="#a8a8a8" stroke-width="1.6"/>
<defs><linearGradient id="dgDeltaC" x1="0" y1="0" x2="0" y2="1"><stop offset="0" stop-color="#e8b090"/><stop offset=".25" stop-color="#dc8c60"/><stop offset=".5" stop-color="#d48a62"/><stop offset=".8" stop-color="#a06a4c"/><stop offset="1" stop-color="#553528"/></linearGradient></defs>
<rect x="46.0" y="225.7" width="125.0" height="175.8" fill="url(#dgDeltaC)" stroke="#000" stroke-width="1.4"/>
</svg>
<div class="t" style="left:801.2px;top:136.7px;font-size:18px;color:#d8d8d8;transform:scaleX(0.835);">4</div>
<div class="t" style="left:801.2px;top:189.2px;font-size:18px;color:#d8d8d8;transform:scaleX(0.835);">3</div>
<div class="t" style="left:801.2px;top:241.7px;font-size:18px;color:#d8d8d8;transform:scaleX(0.835);">2</div>
<div class="t" style="left:801.2px;top:294.2px;font-size:18px;color:#d8d8d8;transform:scaleX(0.835);">1</div>
<div class="t" style="left:801.2px;top:346.7px;font-size:18px;color:#d8d8d8;transform:scaleX(0.835);">0</div>
<div class="t" style="left:796.2px;top:399.2px;font-size:18px;color:#d8d8d8;transform:scaleX(0.835);">-1</div>
<div class="t" style="left:796.2px;top:451.7px;font-size:18px;color:#d8d8d8;transform:scaleX(0.835);">-2</div>
<div class="t" style="left:796.2px;top:504.2px;font-size:18px;color:#d8d8d8;transform:scaleX(0.835);">-3</div>
<div class="t" style="left:796.2px;top:556.7px;font-size:18px;color:#d8d8d8;transform:scaleX(0.835);">-4</div>
<div class="t" style="left:1065.3px;top:124.6px;font-size:17px;color:#d8d8d8;transform:scaleX(0.885);">DeltaH</div>
<div style="position:absolute;left:1018.8px;top:145px;width:157.7px;height:420px;background:#232323"></div>
<svg style="position:absolute;left:988px;top:130px" width="200" height="450">
<path d="M25.8 15.0h5" stroke="#a8a8a8" stroke-width="1.5"/>
<path d="M30.8 85.7H188.5" stroke="#909090" stroke-width="1.5"/>
<path d="M25.8 85.7h5" stroke="#a8a8a8" stroke-width="1.5"/>
<path d="M30.8 155.7H188.5" stroke="#909090" stroke-width="1.5"/>
<path d="M25.8 155.7h5" stroke="#a8a8a8" stroke-width="1.5"/>
<path d="M30.8 225.7H188.5" stroke="#909090" stroke-width="1.5"/>
<path d="M25.8 225.7h5" stroke="#a8a8a8" stroke-width="1.5"/>
<path d="M30.8 295.7H188.5" stroke="#909090" stroke-width="1.5"/>
<path d="M25.8 295.7h5" stroke="#a8a8a8" stroke-width="1.5"/>
<path d="M30.8 365.7H188.5" stroke="#909090" stroke-width="1.5"/>
<path d="M25.8 365.7h5" stroke="#a8a8a8" stroke-width="1.5"/>
<path d="M25.8 435.0h5" stroke="#a8a8a8" stroke-width="1.5"/>
<path d="M30.8 15H188.5V435H30.8Z" fill="none" stroke="#a8a8a8" stroke-width="1.6"/>
<defs><linearGradient id="dgDeltaH" x1="0" y1="0" x2="0" y2="1"><stop offset="0" stop-color="#e8b090"/><stop offset=".25" stop-color="#dc8c60"/><stop offset=".5" stop-color="#d48a62"/><stop offset=".8" stop-color="#a06a4c"/><stop offset="1" stop-color="#553528"/></linearGradient></defs>
<rect x="46.0" y="49.5" width="125.5" height="176.7" fill="url(#dgDeltaH)" stroke="#000" stroke-width="1.4"/>
</svg>
<div class="t" style="left:1004.3px;top:136.7px;font-size:18px;color:#d8d8d8;transform:scaleX(0.835);">6</div>
<div class="t" style="left:1004.3px;top:206.7px;font-size:18px;color:#d8d8d8;transform:scaleX(0.835);">4</div>
<div class="t" style="left:1004.3px;top:276.7px;font-size:18px;color:#d8d8d8;transform:scaleX(0.835);">2</div>
<div class="t" style="left:1004.3px;top:346.7px;font-size:18px;color:#d8d8d8;transform:scaleX(0.835);">0</div>
<div class="t" style="left:999.3px;top:416.7px;font-size:18px;color:#d8d8d8;transform:scaleX(0.835);">-2</div>
<div class="t" style="left:999.3px;top:486.7px;font-size:18px;color:#d8d8d8;transform:scaleX(0.835);">-4</div>
<div class="t" style="left:999.3px;top:556.7px;font-size:18px;color:#d8d8d8;transform:scaleX(0.835);">-6</div>
<div style="position:absolute;left:587px;top:582px;width:610px;height:220px;background:#000;overflow:hidden">
<div style="position:absolute;left:17.5px;top:7px;width:60.5px;height:147px;box-sizing:border-box;border:1px solid #f0f0f0;box-shadow:inset 0 0 0 1px rgba(120,130,150,.35);background:linear-gradient(#e9f0ff 0,#e9f0ff 50.7%,#f2f2f2 50.7%,#f2f2f2 100%)"></div>
<div class="t" style="left:31.0px;top:159.7px;font-size:16px;color:#f4f4f4;transform:scaleX(0.831);">White</div>
<div style="position:absolute;left:87.6px;top:7px;width:60.5px;height:147px;box-sizing:border-box;border:1px solid #f0f0f0;box-shadow:inset 0 0 0 1px rgba(120,130,150,.35);background:linear-gradient(#e2e8f4 0,#e2e8f4 50.7%,#e6e6e6 50.7%,#e6e6e6 100%)"></div>
<div class="t" style="left:96.1px;top:159.7px;font-size:16px;color:#f4f4f4;transform:scaleX(0.773);">Gray 80</div>
<div style="position:absolute;left:157.7px;top:7px;width:60.5px;height:147px;box-sizing:border-box;border:1px solid #f0f0f0;box-shadow:inset 0 0 0 1px rgba(120,130,150,.35);background:linear-gradient(#ced6e2 0,#ced6e2 50.7%,#d2d2d2 50.7%,#d2d2d2 100%)"></div>
<div class="t" style="left:166.2px;top:159.7px;font-size:16px;color:#f4f4f4;transform:scaleX(0.773);">Gray 65</div>
<div style="position:absolute;left:227.8px;top:7px;width:60.5px;height:147px;box-sizing:border-box;border:1px solid #f0f0f0;box-shadow:inset 0 0 0 1px rgba(120,130,150,.35);background:linear-gradient(#b8bec9 0,#b8bec9 50.7%,#bababa 50.7%,#bababa 100%)"></div>
<div class="t" style="left:236.3px;top:159.7px;font-size:16px;color:#f4f4f4;transform:scaleX(0.773);">Gray 50</div>
<div style="position:absolute;left:297.9px;top:7px;width:60.5px;height:147px;box-sizing:border-box;border:1px solid #f0f0f0;box-shadow:inset 0 0 0 1px rgba(120,130,150,.35);background:linear-gradient(#9fa3ac 0,#9fa3ac 50.7%,#a0a0a0 50.7%,#a0a0a0 100%)"></div>
<div class="t" style="left:306.4px;top:159.7px;font-size:16px;color:#f4f4f4;transform:scaleX(0.773);">Gray 35</div>
<div style="position:absolute;left:368.0px;top:7px;width:60.5px;height:147px;box-sizing:border-box;border:1px solid #f0f0f0;box-shadow:inset 0 0 0 1px rgba(120,130,150,.35);background:linear-gradient(#030305 0,#030305 50.7%,#000000 50.7%,#000000 100%)"></div>
<div class="t" style="left:383.5px;top:159.7px;font-size:16px;color:#f4f4f4;transform:scaleX(0.767);">Black</div>
<div style="position:absolute;left:438.1px;top:7px;width:60.5px;height:147px;box-sizing:border-box;border:1px solid #f0f0f0;box-shadow:inset 0 0 0 1px rgba(120,130,150,.35);background:linear-gradient(#705445 0,#705445 50.7%,#745244 50.7%,#745244 100%)"></div>
<div class="t" style="left:442.3px;top:159.7px;font-size:16px;color:#f4f4f4;transform:scaleX(0.757);">Dark Skin</div>
<div style="position:absolute;left:508.2px;top:7px;width:60.5px;height:147px;box-sizing:border-box;border:1px solid #f0f0f0;box-shadow:inset 0 0 0 1px rgba(120,130,150,.35);background:linear-gradient(#bf9c8c 0,#bf9c8c 50.7%,#c49884 50.7%,#c49884 100%)"></div>
<div class="t" style="left:511.7px;top:159.7px;font-size:16px;color:#f4f4f4;transform:scaleX(0.769);">Light Skin</div>
<div style="position:absolute;left:578.3px;top:7px;width:60.5px;height:147px;box-sizing:border-box;border:1px solid #f0f0f0;box-shadow:inset 0 0 0 1px rgba(120,130,150,.35);background:linear-gradient(#6281b0 0,#6281b0 50.7%,#607fa6 50.7%,#607fa6 100%)"></div>
<div class="t" style="left:583.8px;top:159.7px;font-size:16px;color:#f4f4f4;transform:scaleX(0.792);">Blue Sky</div>
<div class="t" style="left:1.700px;top:61.1px;font-size:14px;color:#f8f8f8;transform-origin:0 0;transform:rotate(-90deg) scaleX(1.092)">Actual</div>
<div class="t" style="left:1.700px;top:142.2px;font-size:14px;color:#f8f8f8;transform-origin:0 0;transform:rotate(-90deg) scaleX(1.054)">Target</div>
<div style="position:absolute;left:0;top:200px;width:610px;height:20px;background:#666"></div>
<div style="position:absolute;left:1px;top:202px;width:14px;height:16px;border-radius:3px;background:linear-gradient(#999,#777)"></div>
<div style="position:absolute;left:594px;top:202px;width:14px;height:16px;border-radius:3px;background:linear-gradient(#999,#777)"></div>
<svg style="position:absolute;left:0;top:200px" width="610" height="20"><path d="M11 5V15L5 10Z M599 5V15L605 10Z" fill="#444"/></svg>
<div style="position:absolute;left:18.5px;top:202.5px;width:102.5px;height:15px;border-radius:7.5px;background:#4e4e4e"></div>
</div>
<div style="position:absolute;left:1203px;top:106px;width:717px;height:696.600px;background:#1c1c1c"></div>
<div style="position:absolute;left:1210.800px;top:114.400px;width:701.300px;height:679.600px;background:#333"></div>
<div class="t" style="left:1517.8px;top:123.2px;font-size:17px;color:#d8d8d8;transform:scaleX(0.865);">CIE 1976 u'v'</div>
<div style="position:absolute;left:1251px;top:145px;width:657px;height:613px;background:#242424;overflow:hidden"><div style="position:absolute;left:0;top:0;width:657px;height:613px;clip-path:polygon(280.1px 597.1px,280.0px 597.1px,279.7px 597.3px,279.2px 597.2px,278.9px 597.7px,278.6px 597.8px,276.4px 597.5px,274.0px 595.9px,271.5px 593.8px,264.1px 586.7px,252.6px 574.9px,224.4px 546.6px,211.5px 532.9px,200.5px 520.4px,188.3px 505.4px,178.9px 492.8px,168.2px 477.4px,156.5px 459.4px,144.1px 439.2px,131.0px 416.8px,117.3px 391.9px,103.4px 365.0px,89.3px 336.7px,75.4px 307.5px,62.0px 277.9px,55.7px 263.1px,49.7px 248.4px,38.9px 219.8px,29.4px 192.5px,21.2px 166.9px,14.4px 143.6px,9.0px 122.8px,5.0px 104.6px,2.3px 88.6px,0.6px 74.8px,0.0px 63.1px,0.3px 52.9px,0.8px 48.3px,1.5px 44.1px,2.4px 40.2px,3.6px 36.6px,4.9px 33.4px,6.4px 30.4px,8.1px 27.7px,10.0px 25.3px,12.0px 23.2px,14.1px 21.4px,16.4px 19.8px,21.3px 17.3px,23.8px 16.3px,29.3px 14.9px,38.0px 13.8px,50.3px 13.2px,59.6px 13.2px,69.0px 13.4px,85.4px 14.3px,106.6px 16.2px,143.1px 20.5px,203.2px 28.6px,682.0px 95.3px)">
<div style="position:absolute;left:0;top:0;width:657px;height:613px;clip-path:polygon(214.7px 134.7px,2128.9px 2446.6px,3157.1px -458.5px,445.8px -2858.1px);background-color:#f00;background-image:conic-gradient(from -95.58deg at 190.9px 452.3px,rgb(0,255,0) 0deg,rgb(0,255,0) 100.00deg,rgb(0,224,0) 101.23deg,rgb(0,199,0) 102.46deg,rgb(0,177,0) 103.70deg,rgb(0,159,0) 104.93deg,rgb(0,143,0) 106.16deg,rgb(0,129,0) 107.39deg,rgb(0,116,0) 108.63deg,rgb(0,105,0) 109.86deg,rgb(0,95,0) 111.09deg,rgb(0,86,0) 112.32deg,rgb(0,78,0) 113.56deg,rgb(0,70,0) 114.79deg,rgb(0,63,0) 116.02deg,rgb(0,57,0) 117.25deg,rgb(0,51,0) 118.48deg,rgb(0,45,0) 119.72deg,rgb(0,40,0) 120.95deg,rgb(0,36,0) 122.18deg,rgb(0,31,0) 123.41deg,rgb(0,27,0) 124.65deg,rgb(0,23,0) 125.88deg,rgb(0,19,0) 127.11deg,rgb(0,16,0) 128.34deg,rgb(0,12,0) 129.58deg,rgb(0,9,0) 130.81deg,rgb(0,6,0) 132.04deg,rgb(0,3,0) 133.27deg,rgb(0,0,0) 134.50deg),conic-gradient(from -3.52deg at 135.5px 38.0px,rgb(0,0,0) 0deg,rgb(0,0,0) 100.00deg,rgb(0,0,6) 101.57deg,rgb(0,0,11) 103.14deg,rgb(0,0,17) 104.70deg,rgb(0,0,23) 106.27deg,rgb(0,0,29) 107.84deg,rgb(0,0,35) 109.41deg,rgb(0,0,41) 110.97deg,rgb(0,0,47) 112.54deg,rgb(0,0,54) 114.11deg,rgb(0,0,61) 115.68deg,rgb(0,0,68) 117.24deg,rgb(0,0,75) 118.81deg,rgb(0,0,82) 120.38deg,rgb(0,0,90) 121.95deg,rgb(0,0,98) 123.52deg,rgb(0,0,107) 125.08deg,rgb(0,0,115) 126.65deg,rgb(0,0,125) 128.22deg,rgb(0,0,134) 129.79deg,rgb(0,0,145) 131.35deg,rgb(0,0,155) 132.92deg,rgb(0,0,167) 134.49deg,rgb(0,0,179) 136.06deg,rgb(0,0,192) 137.62deg,rgb(0,0,206) 139.19deg,rgb(0,0,221) 140.76deg,rgb(0,0,237) 142.33deg,rgb(0,0,255) 143.90deg);background-blend-mode:screen"></div>
<div style="position:absolute;left:0;top:0;width:657px;height:613px;clip-path:polygon(216.1px 135.0px,447.2px -2857.6px,-1698.4px -2176.9px,-2726.5px 728.1px);background-color:#0f0;background-image:conic-gradient(from -107.60deg at 190.9px 452.3px,rgb(0,0,0) 0deg,rgb(0,0,0) 100.00deg,rgb(7,0,0) 100.43deg,rgb(15,0,0) 100.86deg,rgb(22,0,0) 101.29deg,rgb(29,0,0) 101.72deg,rgb(37,0,0) 102.15deg,rgb(45,0,0) 102.58deg,rgb(53,0,0) 103.00deg,rgb(61,0,0) 103.43deg,rgb(69,0,0) 103.86deg,rgb(77,0,0) 104.29deg,rgb(86,0,0) 104.72deg,rgb(94,0,0) 105.15deg,rgb(103,0,0) 105.58deg,rgb(112,0,0) 106.01deg,rgb(121,0,0) 106.44deg,rgb(130,0,0) 106.87deg,rgb(139,0,0) 107.30deg,rgb(149,0,0) 107.73deg,rgb(159,0,0) 108.16deg,rgb(168,0,0) 108.58deg,rgb(178,0,0) 109.01deg,rgb(189,0,0) 109.44deg,rgb(199,0,0) 109.87deg,rgb(210,0,0) 110.30deg,rgb(221,0,0) 110.73deg,rgb(232,0,0) 111.16deg,rgb(243,0,0) 111.59deg,rgb(255,0,0) 112.02deg),conic-gradient(from -201.39deg at 492.7px 78.6px,rgb(0,0,255) 0deg,rgb(0,0,255) 100.00deg,rgb(0,0,243) 100.64deg,rgb(0,0,231) 101.28deg,rgb(0,0,220) 101.92deg,rgb(0,0,209) 102.55deg,rgb(0,0,198) 103.19deg,rgb(0,0,187) 103.83deg,rgb(0,0,177) 104.47deg,rgb(0,0,166) 105.11deg,rgb(0,0,157) 105.75deg,rgb(0,0,147) 106.38deg,rgb(0,0,137) 107.02deg,rgb(0,0,128) 107.66deg,rgb(0,0,119) 108.30deg,rgb(0,0,110) 108.94deg,rgb(0,0,101) 109.58deg,rgb(0,0,92) 110.21deg,rgb(0,0,84) 110.85deg,rgb(0,0,76) 111.49deg,rgb(0,0,68) 112.13deg,rgb(0,0,60) 112.77deg,rgb(0,0,52) 113.41deg,rgb(0,0,44) 114.04deg,rgb(0,0,36) 114.68deg,rgb(0,0,29) 115.32deg,rgb(0,0,21) 115.96deg,rgb(0,0,14) 116.60deg,rgb(0,0,7) 117.24deg,rgb(0,0,0) 117.88deg);background-blend-mode:screen"></div>
<div style="position:absolute;left:0;top:0;width:657px;height:613px;clip-path:polygon(215.7px 133.7px,-2727.0px 726.7px,-15.8px 3126.3px,2129.8px 2445.5px);background-color:#00f;background-image:conic-gradient(from 40.38deg at 135.5px 38.0px,rgb(255,0,0) 0deg,rgb(255,0,0) 100.00deg,rgb(242,0,0) 101.14deg,rgb(229,0,0) 102.29deg,rgb(217,0,0) 103.43deg,rgb(205,0,0) 104.57deg,rgb(194,0,0) 105.72deg,rgb(183,0,0) 106.86deg,rgb(172,0,0) 108.01deg,rgb(162,0,0) 109.15deg,rgb(152,0,0) 110.29deg,rgb(142,0,0) 111.44deg,rgb(133,0,0) 112.58deg,rgb(124,0,0) 113.72deg,rgb(115,0,0) 114.87deg,rgb(106,0,0) 116.01deg,rgb(98,0,0) 117.15deg,rgb(89,0,0) 118.30deg,rgb(81,0,0) 119.44deg,rgb(73,0,0) 120.59deg,rgb(65,0,0) 121.73deg,rgb(58,0,0) 122.87deg,rgb(50,0,0) 124.02deg,rgb(43,0,0) 125.16deg,rgb(35,0,0) 126.30deg,rgb(28,0,0) 127.45deg,rgb(21,0,0) 128.59deg,rgb(14,0,0) 129.73deg,rgb(7,0,0) 130.88deg,rgb(0,0,0) 132.02deg),conic-gradient(from -241.08deg at 492.7px 78.6px,rgb(0,0,0) 0deg,rgb(0,0,0) 100.00deg,rgb(0,4,0) 101.42deg,rgb(0,7,0) 102.83deg,rgb(0,11,0) 104.25deg,rgb(0,15,0) 105.67deg,rgb(0,20,0) 107.09deg,rgb(0,24,0) 108.50deg,rgb(0,29,0) 109.92deg,rgb(0,33,0) 111.34deg,rgb(0,38,0) 112.76deg,rgb(0,44,0) 114.17deg,rgb(0,49,0) 115.59deg,rgb(0,55,0) 117.01deg,rgb(0,61,0) 118.43deg,rgb(0,68,0) 119.84deg,rgb(0,75,0) 121.26deg,rgb(0,83,0) 122.68deg,rgb(0,91,0) 124.09deg,rgb(0,99,0) 125.51deg,rgb(0,109,0) 126.93deg,rgb(0,119,0) 128.35deg,rgb(0,130,0) 129.76deg,rgb(0,143,0) 131.18deg,rgb(0,156,0) 132.60deg,rgb(0,172,0) 134.02deg,rgb(0,189,0) 135.43deg,rgb(0,208,0) 136.85deg,rgb(0,230,0) 138.27deg,rgb(0,255,0) 139.68deg);background-blend-mode:screen"></div>
<svg style="position:absolute;left:0;top:0" width="657" height="613"><path fill-rule="evenodd" fill="rgba(0,0,0,0.396)" d="M-10 -10H667V623H-10Z M492.7 78.6 L135.5 38.0 L190.9 452.3 Z"/></svg>
</div></div>
<svg style="position:absolute;left:1203px;top:106px" width="717" height="696">
<path d="M1250 144H1908.3V758H1250Z" transform="translate(-1203,-106)" fill="none" stroke="#a8a8a8" stroke-width="2"/>
<path d="M1243.5 759.0h6 M1249.5 758v8 M1243.5 707.8h6 M1304.3 758v8 M1243.5 656.6h6 M1359.1 758v8 M1243.5 605.4h6 M1414.0 758v8 M1243.5 554.2h6 M1468.8 758v8 M1243.5 503.0h6 M1523.6 758v8 M1243.5 451.8h6 M1578.4 758v8 M1243.5 400.6h6 M1633.2 758v8 M1243.5 349.4h6 M1688.1 758v8 M1243.5 298.2h6 M1742.9 758v8 M1243.5 247.0h6 M1797.7 758v8 M1243.5 195.8h6 M1852.5 758v8" transform="translate(-1203,-106)" fill="none" stroke="#a8a8a8" stroke-width="1.6"/>
<g transform="translate(-1203,-106)" fill="none" stroke="#fff" stroke-width="1.5">
<rect x="1378.3" y="172.4" width="14.2" height="17.2"/>
<rect x="1403.8" y="202.9" width="14.2" height="17.2"/>
<rect x="1444.4" y="192.9" width="14.2" height="17.2"/>
<rect x="1465.4" y="182.3" width="14.2" height="17.2"/>
<rect x="1493.4" y="187.8" width="14.2" height="17.2"/>
<rect x="1441.8" y="219.9" width="14.2" height="17.2"/>
<rect x="1525.8" y="195.8" width="14.2" height="17.2"/>
<rect x="1571.0" y="200.8" width="14.2" height="17.2"/>
<rect x="1571.0" y="205.2" width="14.2" height="17.2"/>
<rect x="1590.4" y="253.9" width="14.2" height="17.2"/>
<rect x="1410.8" y="258.9" width="14.2" height="17.2"/>
<rect x="1393.8" y="282.8" width="14.2" height="17.2"/>
<rect x="1399.9" y="321.9" width="14.2" height="17.2"/>
<rect x="1434.8" y="318.2" width="14.2" height="17.2"/>
<rect x="1456.0" y="324.8" width="14.2" height="17.2"/>
<rect x="1492.4" y="347.4" width="14.2" height="17.2"/>
<rect x="1556.8" y="312.0" width="14.2" height="17.2"/>
<rect x="1437.3" y="384.8" width="14.2" height="17.2"/>
<rect x="1576.3" y="409.9" width="14.2" height="17.2"/>
<rect x="1437.3" y="447.6" width="14.2" height="17.2"/>
<rect x="1653.4" y="238.8" width="14.2" height="17.2"/>
<rect x="1736.3" y="212.9" width="14.2" height="17.2"/>
<rect x="1434.9" y="586.9" width="14.2" height="17.2"/>
<rect x="1499.2" y="231.4" width="14.2" height="17.2"/>
<rect x="1498.5" y="245.8" width="14.2" height="17.2"/>
<rect x="1510.4" y="238.9" width="14.2" height="17.2"/>
<rect x="1517.9" y="228.9" width="14.2" height="17.2"/>
<rect x="1522.9" y="221.4" width="14.2" height="17.2"/>
<rect x="1529.2" y="228.9" width="14.2" height="17.2"/>
<rect x="1542.9" y="221.4" width="14.2" height="17.2"/>
<rect x="1544.2" y="228.3" width="14.2" height="17.2"/>
<rect x="1551.7" y="217.7" width="14.2" height="17.2"/>
<rect x="1544.8" y="210.8" width="14.2" height="17.2"/>
<rect x="1535.9" y="225.4" width="14.2" height="17.2"/>
<rect x="1538.9" y="219.4" width="14.2" height="17.2"/>
<rect x="1512.9" y="235.4" width="14.2" height="17.2"/>
<rect x="1504.9" y="239.4" width="14.2" height="17.2"/>
<rect x="1458.2" y="269" width="14.2" height="17.2" stroke="#000" stroke-width="2.2"/>
</g>
<g transform="translate(-1203,-106)" stroke="#000" stroke-width="1.1">
<ellipse cx="1395.6" cy="172.5" rx="4.2" ry="5.4" fill="#00ff00"/>
<ellipse cx="1417.1" cy="208.1" rx="4.2" ry="5.4" fill="#4a9050"/>
<ellipse cx="1452.0" cy="194.6" rx="4.2" ry="5.4" fill="#a0b850"/>
<ellipse cx="1470.0" cy="180.9" rx="4.2" ry="5.4" fill="#ffff00"/>
<ellipse cx="1494.0" cy="186.0" rx="4.2" ry="5.4" fill="#f0c830"/>
<ellipse cx="1448.9" cy="227.0" rx="4.2" ry="5.4" fill="#5a6848"/>
<ellipse cx="1523.0" cy="194.4" rx="4.2" ry="5.4" fill="#e0a030"/>
<ellipse cx="1564.8" cy="199.8" rx="4.2" ry="5.4" fill="#c07030"/>
<ellipse cx="1568.1" cy="203.1" rx="4.2" ry="5.4" fill="#b06028"/>
<ellipse cx="1534.5" cy="215.0" rx="4.2" ry="5.4" fill="#a06030"/>
<ellipse cx="1546.3" cy="211.3" rx="4.2" ry="5.4" fill="#7a4828"/>
<ellipse cx="1554.0" cy="217.8" rx="4.2" ry="5.4" fill="#6a3c28"/>
<ellipse cx="1508.8" cy="247.5" rx="4.2" ry="5.4" fill="#805040"/>
<ellipse cx="1508.0" cy="241.3" rx="4.2" ry="5.4" fill="#c88868"/>
<ellipse cx="1512.5" cy="242.5" rx="4.2" ry="5.4" fill="#c89070"/>
<ellipse cx="1518.8" cy="235.0" rx="4.2" ry="5.4" fill="#a06840"/>
<ellipse cx="1515.0" cy="228.5" rx="4.2" ry="5.4" fill="#c88860"/>
<ellipse cx="1535.0" cy="229.5" rx="4.2" ry="5.4" fill="#c08060"/>
<ellipse cx="1529.0" cy="228.5" rx="4.2" ry="5.4" fill="#d08860"/>
<ellipse cx="1513.0" cy="236.5" rx="4.2" ry="5.4" fill="#d09070"/>
<ellipse cx="1522.0" cy="239.5" rx="4.2" ry="5.4" fill="#d89070"/>
<ellipse cx="1534.5" cy="237.0" rx="4.2" ry="5.4" fill="#f09878"/>
<ellipse cx="1494.0" cy="245.4" rx="4.2" ry="5.4" fill="#f8c098"/>
<ellipse cx="1495.6" cy="259.4" rx="4.2" ry="5.4" fill="#e0a888"/>
<ellipse cx="1491.8" cy="256.9" rx="4.2" ry="5.4" fill="#f8c8a8"/>
<ellipse cx="1581.0" cy="270.9" rx="4.2" ry="5.4" fill="#c05868"/>
<ellipse cx="1424.0" cy="274.0" rx="4.2" ry="5.4" fill="#60b0a0"/>
<ellipse cx="1461.0" cy="288.7" rx="4.2" ry="5.4" fill="#f0f0f0"/>
<ellipse cx="1462.5" cy="285.6" rx="4.2" ry="5.4" fill="#a0a0a0"/>
<ellipse cx="1410.1" cy="301.3" rx="4.2" ry="5.4" fill="#00ffff"/>
<ellipse cx="1414.0" cy="341.0" rx="4.2" ry="5.4" fill="#008898"/>
<ellipse cx="1441.9" cy="338.9" rx="4.2" ry="5.4" fill="#6080a8"/>
<ellipse cx="1456.1" cy="336.7" rx="4.2" ry="5.4" fill="#000000"/>
<ellipse cx="1459.0" cy="347.1" rx="4.2" ry="5.4" fill="#8880b8"/>
<ellipse cx="1543.9" cy="339.1" rx="4.2" ry="5.4" fill="#c05898"/>
<ellipse cx="1478.0" cy="388.0" rx="4.2" ry="5.4" fill="#604068"/>
<ellipse cx="1442.9" cy="410.2" rx="4.2" ry="5.4" fill="#5060a8"/>
<ellipse cx="1554.0" cy="448.0" rx="4.2" ry="5.4" fill="#ff00ff"/>
<ellipse cx="1441.9" cy="478.0" rx="4.2" ry="5.4" fill="#384098"/>
<ellipse cx="1654.9" cy="247.4" rx="4.2" ry="5.4" fill="#b03038"/>
<ellipse cx="1738.1" cy="212.9" rx="4.2" ry="5.4" fill="#ff0000"/>
<ellipse cx="1440.5" cy="590.1" rx="4.2" ry="5.4" fill="#0000ff"/>
</g>
</svg>
<div class="t" style="left:1234.3px;top:751.0px;font-size:18px;color:#d8d8d8;transform:scaleX(0.837);">0</div>
<div class="t" style="left:1245.3px;top:769.9px;font-size:18px;color:#d8d8d8;transform:scaleX(0.837);">0</div>
<div class="t" style="left:1213.4px;top:699.8px;font-size:18px;color:#d8d8d8;transform:scaleX(0.837);">0.05</div>
<div class="t" style="left:1289.7px;top:769.9px;font-size:18px;color:#d8d8d8;transform:scaleX(0.837);">0.05</div>
<div class="t" style="left:1221.8px;top:648.6px;font-size:18px;color:#d8d8d8;transform:scaleX(0.837);">0.1</div>
<div class="t" style="left:1348.7px;top:769.9px;font-size:18px;color:#d8d8d8;transform:scaleX(0.837);">0.1</div>
<div class="t" style="left:1213.4px;top:597.4px;font-size:18px;color:#d8d8d8;transform:scaleX(0.837);">0.15</div>
<div class="t" style="left:1399.3px;top:769.9px;font-size:18px;color:#d8d8d8;transform:scaleX(0.837);">0.15</div>
<div class="t" style="left:1221.8px;top:546.2px;font-size:18px;color:#d8d8d8;transform:scaleX(0.837);">0.2</div>
<div class="t" style="left:1458.3px;top:769.9px;font-size:18px;color:#d8d8d8;transform:scaleX(0.837);">0.2</div>
<div class="t" style="left:1213.4px;top:495.0px;font-size:18px;color:#d8d8d8;transform:scaleX(0.837);">0.25</div>
<div class="t" style="left:1508.9px;top:769.9px;font-size:18px;color:#d8d8d8;transform:scaleX(0.837);">0.25</div>
<div class="t" style="left:1221.8px;top:443.8px;font-size:18px;color:#d8d8d8;transform:scaleX(0.837);">0.3</div>
<div class="t" style="left:1567.9px;top:769.9px;font-size:18px;color:#d8d8d8;transform:scaleX(0.837);">0.3</div>
<div class="t" style="left:1213.4px;top:392.6px;font-size:18px;color:#d8d8d8;transform:scaleX(0.837);">0.35</div>
<div class="t" style="left:1618.6px;top:769.9px;font-size:18px;color:#d8d8d8;transform:scaleX(0.837);">0.35</div>
<div class="t" style="left:1221.8px;top:341.4px;font-size:18px;color:#d8d8d8;transform:scaleX(0.837);">0.4</div>
<div class="t" style="left:1677.6px;top:769.9px;font-size:18px;color:#d8d8d8;transform:scaleX(0.837);">0.4</div>
<div class="t" style="left:1213.4px;top:290.2px;font-size:18px;color:#d8d8d8;transform:scaleX(0.837);">0.45</div>
<div class="t" style="left:1728.2px;top:769.9px;font-size:18px;color:#d8d8d8;transform:scaleX(0.837);">0.45</div>
<div class="t" style="left:1221.8px;top:239.0px;font-size:18px;color:#d8d8d8;transform:scaleX(0.837);">0.5</div>
<div class="t" style="left:1787.2px;top:769.9px;font-size:18px;color:#d8d8d8;transform:scaleX(0.837);">0.5</div>
<div class="t" style="left:1213.4px;top:187.8px;font-size:18px;color:#d8d8d8;transform:scaleX(0.837);">0.55</div>
<div class="t" style="left:1837.9px;top:769.9px;font-size:18px;color:#d8d8d8;transform:scaleX(0.837);">0.55</div>
<div style="position:absolute;left:1697px;top:542px;width:205px;height:163px;box-sizing:border-box;border:1.600px solid #8a8a8a;box-shadow:0 0 0 2.400px #2b2b2b;background:linear-gradient(127deg,#ff9526 0%,#ff7a22 30%,#ff6424 55%,#ff4a22 85%,#fe4020 100%)"></div>
<svg style="position:absolute;left:1697px;top:542px" width="205" height="163">
<g transform="translate(-1697,-542)" fill="none" stroke="#fff" stroke-width="1.5">
<rect x="1832.6" y="565.7" width="13.6" height="16.4" stroke-width="1.4"/>
<rect x="1883.6" y="567.2" width="13.6" height="16.4" stroke-width="1.4"/>
<rect x="1724.6" y="590.8" width="13.6" height="16.4" stroke-width="1.4"/>
<rect x="1792.1" y="614.8" width="13.6" height="16.4" stroke-width="1.4"/>
<rect x="1882.1" y="613.7" width="13.6" height="16.4" stroke-width="1.4"/>
<rect x="1811.6" y="631.7" width="13.6" height="16.4" stroke-width="1.4"/>
<rect x="1702.5" y="631.7" width="13.6" height="16.4" stroke-width="1.4"/>
<rect x="1709.2" y="642.6" width="13.6" height="16.4" stroke-width="1.4"/>
<rect x="1717.5" y="657.9" width="13.6" height="16.4" stroke-width="1.4"/>
<rect x="1796.2" y="662.4" width="13.6" height="16.4" stroke-width="1.4"/>
</g><g transform="translate(-1697,-542)" stroke="#000" stroke-width="1.1">
<ellipse cx="1746.0" cy="599.0" rx="4.2" ry="5.2" fill="#d08860"/>
<ellipse cx="1764.0" cy="617.7" rx="4.2" ry="5.2" fill="#c87850"/>
<ellipse cx="1726.1" cy="656.7" rx="4.2" ry="5.2" fill="#f09870"/>
</g></svg>
<div style="position:absolute;left:1645px;top:718px;width:260px;height:33px;background:#333"></div>
<div class="t" style="left:1646.5px;top:724.5px;font-size:23px;color:#f0f0f0;transform:scaleX(0.880);">RGB Triplet: 217, 140, 94</div>
<div class="t" style="left:252.3px;top:811.7px;font-size:35px;color:#f0f0f0;transform:scaleX(0.867);">Avg dE2000: 4.06</div>
<div class="t" style="left:246.6px;top:862.9px;font-size:35px;color:#f0f0f0;transform:scaleX(0.884);">Max dE2000: 7.68</div>
<div class="t" style="left:215.0px;top:921.7px;font-size:35px;color:#f0f0f0;transform:scaleX(0.886);">Current Reading</div>
<div class="t" style="left:215.4px;top:970.2px;font-size:31px;color:#f0f0f0;transform:scaleX(0.831);">x: 0.4343</div>
<div class="t" style="left:377.0px;top:970.2px;font-size:31px;color:#f0f0f0;transform:scaleX(0.828);">y: 0.3913</div>
<div class="t" style="left:215.4px;top:1021.6px;font-size:31px;color:#f0f0f0;transform:scaleX(0.831);">fL: 35.39</div>
<div class="t" style="left:215.4px;top:1063.8px;font-size:31px;color:#f0f0f0;transform:scaleX(0.868);">cd/m²: 121.25</div>
<div style="position:absolute;left:532px;top:821px;width:1388px;height:281px;overflow:hidden">
<div style="position:absolute;left:0;top:0;width:1388px;height:34.6px;background:linear-gradient(#2d2d2d 0,#2a2a2a 50%,#171717 52%,#131313 100%)"></div>
<div style="position:absolute;left:0;top:0;width:9px;height:34.6px;background:#000"></div>
<div style="position:absolute;left:0;top:34.7px;width:1388px;height:32.3px;background:#424242"></div>
<div style="position:absolute;left:0;top:67.0px;width:1388px;height:32.2px;background:#808080"></div>
<div style="position:absolute;left:0;top:99.2px;width:1388px;height:32.2px;background:#424242"></div>
<div style="position:absolute;left:0;top:131.4px;width:1388px;height:32.2px;background:#808080"></div>
<div style="position:absolute;left:0;top:163.6px;width:1388px;height:32.2px;background:#424242"></div>
<div style="position:absolute;left:0;top:195.8px;width:1388px;height:32.2px;background:#808080"></div>
<div style="position:absolute;left:0;top:228.0px;width:1388px;height:32.2px;background:#424242"></div>
<div style="position:absolute;left:0;top:34.6px;width:9px;height:225.600px;background:linear-gradient(90deg,#181818 3px,#262626 3px)"></div>
<div style="position:absolute;left:518.5px;top:164.3px;width:61.0px;height:29.5px;background:#f2f2f2;box-shadow:0 0 0 .6px #bbb"></div>
<div style="position:absolute;left:581.0px;top:164.3px;width:66.0px;height:29.5px;background:#f2f2f2;box-shadow:0 0 0 .6px #bbb"></div>
<div style="position:absolute;left:649.0px;top:164.3px;width:37.0px;height:29.5px;background:#f2f2f2;box-shadow:0 0 0 .6px #bbb"></div>
<div style="position:absolute;left:688.0px;top:164.3px;width:68.0px;height:29.5px;background:#f2f2f2;box-shadow:0 0 0 .6px #bbb"></div>
<div style="position:absolute;left:757.5px;top:164.3px;width:72.5px;height:29.5px;background:#f2f2f2;box-shadow:0 0 0 .6px #bbb"></div>
<div style="position:absolute;left:831.5px;top:164.3px;width:35.0px;height:29.5px;background:#f2f2f2;box-shadow:0 0 0 .6px #bbb"></div>
<div style="position:absolute;left:868.0px;top:164.3px;width:67.5px;height:29.5px;background:#f2f2f2;box-shadow:0 0 0 .6px #bbb"></div>
<div class="t" style="left:91.7px;top:9.6px;font-size:17px;color:#f0f0f0;transform:scaleX(0.667);">White</div>
<div class="t" style="left:132.5px;top:9.6px;font-size:17px;color:#f0f0f0;transform:scaleX(0.612);">Gray 80</div>
<div class="t" style="left:175.2px;top:9.6px;font-size:17px;color:#f0f0f0;transform:scaleX(0.612);">Gray 65</div>
<div class="t" style="left:217.8px;top:9.6px;font-size:17px;color:#f0f0f0;transform:scaleX(0.612);">Gray 50</div>
<div class="t" style="left:260.5px;top:9.6px;font-size:17px;color:#f0f0f0;transform:scaleX(0.612);">Gray 35</div>
<div class="t" style="left:302.8px;top:9.6px;font-size:17px;color:#f0f0f0;transform:scaleX(0.613);">Black</div>
<div class="t" style="left:333.8px;top:9.6px;font-size:17px;color:#f0f0f0;transform:scaleX(0.611);">Dark Skin</div>
<div class="t" style="left:384.4px;top:9.6px;font-size:17px;color:#f0f0f0;transform:scaleX(0.611);">Light Skin</div>
<div class="t" style="left:435.8px;top:9.6px;font-size:17px;color:#f0f0f0;transform:scaleX(0.596);">Blue Sky</div>
<div class="t" style="left:481.8px;top:9.6px;font-size:17px;color:#f0f0f0;transform:scaleX(0.610);">Foliage</div>
<div class="t" style="left:521.5px;top:9.6px;font-size:17px;color:#f0f0f0;transform:scaleX(0.624);">Blue Flower</div>
<div class="t" style="left:583.9px;top:9.6px;font-size:17px;color:#f0f0f0;transform:scaleX(0.616);">Bluish Green</div>
<div class="t" style="left:650.2px;top:9.6px;font-size:17px;color:#f0f0f0;transform:scaleX(0.617);">Orange</div>
<div class="t" style="left:690.9px;top:9.6px;font-size:17px;color:#f0f0f0;transform:scaleX(0.629);">Purplish Blue</div>
<div class="t" style="left:759.5px;top:9.6px;font-size:17px;color:#f0f0f0;transform:scaleX(0.641);">Moderate Red</div>
<div class="t" style="left:833.8px;top:9.6px;font-size:17px;color:#f0f0f0;transform:scaleX(0.631);">Purple</div>
<div class="t" style="left:870.6px;top:9.6px;font-size:17px;color:#f0f0f0;transform:scaleX(0.624);">Yellow Green</div>
<div class="t" style="left:939.2px;top:9.6px;font-size:17px;color:#f0f0f0;transform:scaleX(0.625);">Orange Yellow</div>
<div class="t" style="left:1013.6px;top:9.6px;font-size:17px;color:#f0f0f0;transform:scaleX(0.632);">Blue</div>
<div class="t" style="left:1048.2px;top:9.6px;font-size:17px;color:#f0f0f0;transform:scaleX(0.624);">Green</div>
<div class="t" style="left:1083.6px;top:9.6px;font-size:17px;color:#f0f0f0;transform:scaleX(0.593);">Red</div>
<div class="t" style="left:1118.2px;top:9.6px;font-size:17px;color:#f0f0f0;transform:scaleX(0.649);">Yellow</div>
<div class="t" style="left:1159.4px;top:9.6px;font-size:17px;color:#f0f0f0;transform:scaleX(0.650);">Magenta</div>
<div class="t" style="left:1207.9px;top:9.6px;font-size:17px;color:#f0f0f0;transform:scaleX(0.592);">Cyan</div>
<div class="t" style="left:1242.9px;top:9.6px;font-size:17px;color:#f0f0f0;transform:scaleX(0.598);">100% Red</div>
<div class="t" style="left:1295.7px;top:9.6px;font-size:17px;color:#f0f0f0;transform:scaleX(0.608);">100% Green</div>
<div class="t" style="left:1359.9px;top:9.6px;font-size:17px;color:#f0f0f0;transform:scaleX(0.608);">100% Blue</div>
<div class="t" style="left:12.0px;top:42.9px;font-size:19px;color:#f0f0f0;transform:scaleX(0.549);">x: CIE31</div>
<div class="t" style="left:91.7px;top:42.9px;font-size:19px;color:#f0f0f0;transform:scaleX(0.585);">0.30</div>
<div class="t" style="left:132.5px;top:42.9px;font-size:19px;color:#f0f0f0;transform:scaleX(0.585);">0.30</div>
<div class="t" style="left:175.2px;top:42.9px;font-size:19px;color:#f0f0f0;transform:scaleX(0.585);">0.30</div>
<div class="t" style="left:217.8px;top:42.9px;font-size:19px;color:#f0f0f0;transform:scaleX(0.585);">0.30</div>
<div class="t" style="left:260.5px;top:42.9px;font-size:19px;color:#f0f0f0;transform:scaleX(0.585);">0.30</div>
<div class="t" style="left:302.8px;top:42.9px;font-size:19px;color:#f0f0f0;transform:scaleX(0.585);">0.26</div>
<div class="t" style="left:333.8px;top:42.9px;font-size:19px;color:#f0f0f0;transform:scaleX(0.585);">0.39</div>
<div class="t" style="left:384.4px;top:42.9px;font-size:19px;color:#f0f0f0;transform:scaleX(0.585);">0.36</div>
<div class="t" style="left:435.8px;top:42.9px;font-size:19px;color:#f0f0f0;transform:scaleX(0.585);">0.24</div>
<div class="t" style="left:481.8px;top:42.9px;font-size:19px;color:#f0f0f0;transform:scaleX(0.585);">0.34</div>
<div class="t" style="left:521.5px;top:42.9px;font-size:19px;color:#f0f0f0;transform:scaleX(0.585);">0.26</div>
<div class="t" style="left:583.9px;top:42.9px;font-size:19px;color:#f0f0f0;transform:scaleX(0.585);">0.26</div>
<div class="t" style="left:650.2px;top:42.9px;font-size:19px;color:#f0f0f0;transform:scaleX(0.585);">0.51</div>
<div class="t" style="left:690.9px;top:42.9px;font-size:19px;color:#f0f0f0;transform:scaleX(0.585);">0.21</div>
<div class="t" style="left:759.5px;top:42.9px;font-size:19px;color:#f0f0f0;transform:scaleX(0.585);">0.44</div>
<div class="t" style="left:833.8px;top:42.9px;font-size:19px;color:#f0f0f0;transform:scaleX(0.585);">0.25</div>
<div class="t" style="left:870.6px;top:42.9px;font-size:19px;color:#f0f0f0;transform:scaleX(0.585);">0.39</div>
<div class="t" style="left:939.2px;top:42.9px;font-size:19px;color:#f0f0f0;transform:scaleX(0.585);">0.48</div>
<div class="t" style="left:1013.6px;top:42.9px;font-size:19px;color:#f0f0f0;transform:scaleX(0.585);">0.18</div>
<div class="t" style="left:1048.2px;top:42.9px;font-size:19px;color:#f0f0f0;transform:scaleX(0.585);">0.32</div>
<div class="t" style="left:1083.6px;top:42.9px;font-size:19px;color:#f0f0f0;transform:scaleX(0.585);">0.53</div>
<div class="t" style="left:1118.2px;top:42.9px;font-size:19px;color:#f0f0f0;transform:scaleX(0.585);">0.45</div>
<div class="t" style="left:1159.4px;top:42.9px;font-size:19px;color:#f0f0f0;transform:scaleX(0.585);">0.34</div>
<div class="t" style="left:1207.9px;top:42.9px;font-size:19px;color:#f0f0f0;transform:scaleX(0.585);">0.21</div>
<div class="t" style="left:1242.9px;top:42.9px;font-size:19px;color:#f0f0f0;transform:scaleX(0.585);">0.65</div>
<div class="t" style="left:1295.7px;top:42.9px;font-size:19px;color:#f0f0f0;transform:scaleX(0.585);">0.33</div>
<div class="t" style="left:1359.9px;top:42.9px;font-size:19px;color:#f0f0f0;transform:scaleX(0.585);">0.15</div>
<div class="t" style="left:12.0px;top:74.8px;font-size:19px;color:#f0f0f0;transform:scaleX(0.549);">y: CIE31</div>
<div class="t" style="left:91.7px;top:74.8px;font-size:19px;color:#f0f0f0;transform:scaleX(0.585);">0.32</div>
<div class="t" style="left:132.5px;top:74.8px;font-size:19px;color:#f0f0f0;transform:scaleX(0.585);">0.32</div>
<div class="t" style="left:175.2px;top:74.8px;font-size:19px;color:#f0f0f0;transform:scaleX(0.585);">0.32</div>
<div class="t" style="left:217.8px;top:74.8px;font-size:19px;color:#f0f0f0;transform:scaleX(0.585);">0.32</div>
<div class="t" style="left:260.5px;top:74.8px;font-size:19px;color:#f0f0f0;transform:scaleX(0.585);">0.32</div>
<div class="t" style="left:302.8px;top:74.8px;font-size:19px;color:#f0f0f0;transform:scaleX(0.585);">0.25</div>
<div class="t" style="left:333.8px;top:74.8px;font-size:19px;color:#f0f0f0;transform:scaleX(0.585);">0.36</div>
<div class="t" style="left:384.4px;top:74.8px;font-size:19px;color:#f0f0f0;transform:scaleX(0.585);">0.35</div>
<div class="t" style="left:435.8px;top:74.8px;font-size:19px;color:#f0f0f0;transform:scaleX(0.585);">0.25</div>
<div class="t" style="left:481.8px;top:74.8px;font-size:19px;color:#f0f0f0;transform:scaleX(0.585);">0.43</div>
<div class="t" style="left:521.5px;top:74.8px;font-size:19px;color:#f0f0f0;transform:scaleX(0.585);">0.24</div>
<div class="t" style="left:583.9px;top:74.8px;font-size:19px;color:#f0f0f0;transform:scaleX(0.585);">0.35</div>
<div class="t" style="left:650.2px;top:74.8px;font-size:19px;color:#f0f0f0;transform:scaleX(0.585);">0.43</div>
<div class="t" style="left:690.9px;top:74.8px;font-size:19px;color:#f0f0f0;transform:scaleX(0.585);">0.18</div>
<div class="t" style="left:759.5px;top:74.8px;font-size:19px;color:#f0f0f0;transform:scaleX(0.585);">0.31</div>
<div class="t" style="left:833.8px;top:74.8px;font-size:19px;color:#f0f0f0;transform:scaleX(0.585);">0.19</div>
<div class="t" style="left:870.6px;top:74.8px;font-size:19px;color:#f0f0f0;transform:scaleX(0.585);">0.51</div>
<div class="t" style="left:939.2px;top:74.8px;font-size:19px;color:#f0f0f0;transform:scaleX(0.585);">0.47</div>
<div class="t" style="left:1013.6px;top:74.8px;font-size:19px;color:#f0f0f0;transform:scaleX(0.585);">0.12</div>
<div class="t" style="left:1048.2px;top:74.8px;font-size:19px;color:#f0f0f0;transform:scaleX(0.585);">0.50</div>
<div class="t" style="left:1083.6px;top:74.8px;font-size:19px;color:#f0f0f0;transform:scaleX(0.585);">0.32</div>
<div class="t" style="left:1118.2px;top:74.8px;font-size:19px;color:#f0f0f0;transform:scaleX(0.585);">0.50</div>
<div class="t" style="left:1159.4px;top:74.8px;font-size:19px;color:#f0f0f0;transform:scaleX(0.585);">0.23</div>
<div class="t" style="left:1207.9px;top:74.8px;font-size:19px;color:#f0f0f0;transform:scaleX(0.585);">0.25</div>
<div class="t" style="left:1242.9px;top:74.8px;font-size:19px;color:#f0f0f0;transform:scaleX(0.585);">0.34</div>
<div class="t" style="left:1295.7px;top:74.8px;font-size:19px;color:#f0f0f0;transform:scaleX(0.585);">0.62</div>
<div class="t" style="left:1359.9px;top:74.8px;font-size:19px;color:#f0f0f0;transform:scaleX(0.585);">0.06</div>
<div class="t" style="left:12.0px;top:106.5px;font-size:19px;color:#f0f0f0;transform:scaleX(0.513);">Y</div>
<div class="t" style="left:91.7px;top:106.5px;font-size:19px;color:#f0f0f0;transform:scaleX(0.585);">349.38</div>
<div class="t" style="left:132.5px;top:106.5px;font-size:19px;color:#f0f0f0;transform:scaleX(0.585);">285.86</div>
<div class="t" style="left:175.2px;top:106.5px;font-size:19px;color:#f0f0f0;transform:scaleX(0.585);">233.08</div>
<div class="t" style="left:217.8px;top:106.5px;font-size:19px;color:#f0f0f0;transform:scaleX(0.585);">180.64</div>
<div class="t" style="left:260.5px;top:106.5px;font-size:19px;color:#f0f0f0;transform:scaleX(0.585);">126.20</div>
<div class="t" style="left:302.8px;top:106.5px;font-size:19px;color:#f0f0f0;transform:scaleX(0.585);">0.25</div>
<div class="t" style="left:333.8px;top:106.5px;font-size:19px;color:#f0f0f0;transform:scaleX(0.585);">35.51</div>
<div class="t" style="left:384.4px;top:106.5px;font-size:19px;color:#f0f0f0;transform:scaleX(0.585);">126.14</div>
<div class="t" style="left:435.8px;top:106.5px;font-size:19px;color:#f0f0f0;transform:scaleX(0.585);">71.10</div>
<div class="t" style="left:481.8px;top:106.5px;font-size:19px;color:#f0f0f0;transform:scaleX(0.585);">47.57</div>
<div class="t" style="left:521.5px;top:106.5px;font-size:19px;color:#f0f0f0;transform:scaleX(0.585);">88.19</div>
<div class="t" style="left:583.9px;top:106.5px;font-size:19px;color:#f0f0f0;transform:scaleX(0.585);">156.85</div>
<div class="t" style="left:650.2px;top:106.5px;font-size:19px;color:#f0f0f0;transform:scaleX(0.585);">97.57</div>
<div class="t" style="left:690.9px;top:106.5px;font-size:19px;color:#f0f0f0;transform:scaleX(0.585);">45.13</div>
<div class="t" style="left:759.5px;top:106.5px;font-size:19px;color:#f0f0f0;transform:scaleX(0.585);">63.86</div>
<div class="t" style="left:833.8px;top:106.5px;font-size:19px;color:#f0f0f0;transform:scaleX(0.585);">21.90</div>
<div class="t" style="left:870.6px;top:106.5px;font-size:19px;color:#f0f0f0;transform:scaleX(0.585);">155.36</div>
<div class="t" style="left:939.2px;top:106.5px;font-size:19px;color:#f0f0f0;transform:scaleX(0.585);">148.30</div>
<div class="t" style="left:1013.6px;top:106.5px;font-size:19px;color:#f0f0f0;transform:scaleX(0.585);">23.49</div>
<div class="t" style="left:1048.2px;top:106.5px;font-size:19px;color:#f0f0f0;transform:scaleX(0.585);">85.63</div>
<div class="t" style="left:1083.6px;top:106.5px;font-size:19px;color:#f0f0f0;transform:scaleX(0.585);">37.39</div>
<div class="t" style="left:1118.2px;top:106.5px;font-size:19px;color:#f0f0f0;transform:scaleX(0.585);">207.58</div>
<div class="t" style="left:1159.4px;top:106.5px;font-size:19px;color:#f0f0f0;transform:scaleX(0.585);">66.39</div>
<div class="t" style="left:1207.9px;top:106.5px;font-size:19px;color:#f0f0f0;transform:scaleX(0.585);">75.23</div>
<div class="t" style="left:1242.9px;top:106.5px;font-size:19px;color:#f0f0f0;transform:scaleX(0.585);">64.64</div>
<div class="t" style="left:1295.7px;top:106.5px;font-size:19px;color:#f0f0f0;transform:scaleX(0.585);">252.39</div>
<div class="t" style="left:1359.9px;top:106.5px;font-size:19px;color:#f0f0f0;transform:scaleX(0.585);">32.28</div>
<div class="t" style="left:12.0px;top:138.5px;font-size:19px;color:#f0f0f0;transform:scaleX(0.573);">Target x:CIE31</div>
<div class="t" style="left:91.7px;top:138.5px;font-size:19px;color:#f0f0f0;transform:scaleX(0.585);">0.31</div>
<div class="t" style="left:132.5px;top:138.5px;font-size:19px;color:#f0f0f0;transform:scaleX(0.585);">0.31</div>
<div class="t" style="left:175.2px;top:138.5px;font-size:19px;color:#f0f0f0;transform:scaleX(0.585);">0.31</div>
<div class="t" style="left:217.8px;top:138.5px;font-size:19px;color:#f0f0f0;transform:scaleX(0.585);">0.31</div>
<div class="t" style="left:260.5px;top:138.5px;font-size:19px;color:#f0f0f0;transform:scaleX(0.585);">0.31</div>
<div class="t" style="left:302.8px;top:138.5px;font-size:19px;color:#f0f0f0;transform:scaleX(0.585);">0.31</div>
<div class="t" style="left:333.8px;top:138.5px;font-size:19px;color:#f0f0f0;transform:scaleX(0.585);">0.40</div>
<div class="t" style="left:384.4px;top:138.5px;font-size:19px;color:#f0f0f0;transform:scaleX(0.585);">0.38</div>
<div class="t" style="left:435.8px;top:138.5px;font-size:19px;color:#f0f0f0;transform:scaleX(0.585);">0.25</div>
<div class="t" style="left:481.8px;top:138.5px;font-size:19px;color:#f0f0f0;transform:scaleX(0.585);">0.34</div>
<div class="t" style="left:521.5px;top:138.5px;font-size:19px;color:#f0f0f0;transform:scaleX(0.585);">0.27</div>
<div class="t" style="left:583.9px;top:138.5px;font-size:19px;color:#f0f0f0;transform:scaleX(0.585);">0.26</div>
<div class="t" style="left:650.2px;top:138.5px;font-size:19px;color:#f0f0f0;transform:scaleX(0.585);">0.51</div>
<div class="t" style="left:690.9px;top:138.5px;font-size:19px;color:#f0f0f0;transform:scaleX(0.585);">0.22</div>
<div class="t" style="left:759.5px;top:138.5px;font-size:19px;color:#f0f0f0;transform:scaleX(0.585);">0.46</div>
<div class="t" style="left:833.8px;top:138.5px;font-size:19px;color:#f0f0f0;transform:scaleX(0.585);">0.29</div>
<div class="t" style="left:870.6px;top:138.5px;font-size:19px;color:#f0f0f0;transform:scaleX(0.585);">0.38</div>
<div class="t" style="left:939.2px;top:138.5px;font-size:19px;color:#f0f0f0;transform:scaleX(0.585);">0.47</div>
<div class="t" style="left:1013.6px;top:138.5px;font-size:19px;color:#f0f0f0;transform:scaleX(0.585);">0.19</div>
<div class="t" style="left:1048.2px;top:138.5px;font-size:19px;color:#f0f0f0;transform:scaleX(0.585);">0.31</div>
<div class="t" style="left:1083.6px;top:138.5px;font-size:19px;color:#f0f0f0;transform:scaleX(0.585);">0.54</div>
<div class="t" style="left:1118.2px;top:138.5px;font-size:19px;color:#f0f0f0;transform:scaleX(0.585);">0.45</div>
<div class="t" style="left:1159.4px;top:138.5px;font-size:19px;color:#f0f0f0;transform:scaleX(0.585);">0.37</div>
<div class="t" style="left:1207.9px;top:138.5px;font-size:19px;color:#f0f0f0;transform:scaleX(0.585);">0.21</div>
<div class="t" style="left:1242.9px;top:138.5px;font-size:19px;color:#f0f0f0;transform:scaleX(0.585);">0.64</div>
<div class="t" style="left:1295.7px;top:138.5px;font-size:19px;color:#f0f0f0;transform:scaleX(0.585);">0.30</div>
<div class="t" style="left:1359.9px;top:138.5px;font-size:19px;color:#f0f0f0;transform:scaleX(0.585);">0.15</div>
<div class="t" style="left:12.0px;top:171.1px;font-size:19px;color:#f0f0f0;transform:scaleX(0.573);">Target y:CIE31</div>
<div class="t" style="left:91.7px;top:171.1px;font-size:19px;color:#f0f0f0;transform:scaleX(0.585);">0.33</div>
<div class="t" style="left:132.5px;top:171.1px;font-size:19px;color:#f0f0f0;transform:scaleX(0.585);">0.33</div>
<div class="t" style="left:175.2px;top:171.1px;font-size:19px;color:#f0f0f0;transform:scaleX(0.585);">0.33</div>
<div class="t" style="left:217.8px;top:171.1px;font-size:19px;color:#f0f0f0;transform:scaleX(0.585);">0.33</div>
<div class="t" style="left:260.5px;top:171.1px;font-size:19px;color:#f0f0f0;transform:scaleX(0.585);">0.33</div>
<div class="t" style="left:302.8px;top:171.1px;font-size:19px;color:#f0f0f0;transform:scaleX(0.585);">0.33</div>
<div class="t" style="left:333.8px;top:171.1px;font-size:19px;color:#f0f0f0;transform:scaleX(0.585);">0.36</div>
<div class="t" style="left:384.4px;top:171.1px;font-size:19px;color:#f0f0f0;transform:scaleX(0.585);">0.36</div>
<div class="t" style="left:435.8px;top:171.1px;font-size:19px;color:#f0f0f0;transform:scaleX(0.585);">0.27</div>
<div class="t" style="left:481.8px;top:171.1px;font-size:19px;color:#f0f0f0;transform:scaleX(0.585);">0.43</div>
<div class="t" style="left:521.5px;top:171.1px;font-size:19px;color:#222;transform:scaleX(0.585);">0.25</div>
<div class="t" style="left:583.9px;top:171.1px;font-size:19px;color:#222;transform:scaleX(0.585);">0.36</div>
<div class="t" style="left:650.2px;top:171.1px;font-size:19px;color:#222;transform:scaleX(0.585);">0.41</div>
<div class="t" style="left:690.9px;top:171.1px;font-size:19px;color:#222;transform:scaleX(0.585);">0.19</div>
<div class="t" style="left:759.5px;top:171.1px;font-size:19px;color:#222;transform:scaleX(0.585);">0.31</div>
<div class="t" style="left:833.8px;top:171.1px;font-size:19px;color:#222;transform:scaleX(0.585);">0.22</div>
<div class="t" style="left:870.6px;top:171.1px;font-size:19px;color:#222;transform:scaleX(0.585);">0.49</div>
<div class="t" style="left:939.2px;top:171.1px;font-size:19px;color:#f0f0f0;transform:scaleX(0.585);">0.44</div>
<div class="t" style="left:1013.6px;top:171.1px;font-size:19px;color:#f0f0f0;transform:scaleX(0.585);">0.14</div>
<div class="t" style="left:1048.2px;top:171.1px;font-size:19px;color:#f0f0f0;transform:scaleX(0.585);">0.49</div>
<div class="t" style="left:1083.6px;top:171.1px;font-size:19px;color:#f0f0f0;transform:scaleX(0.585);">0.32</div>
<div class="t" style="left:1118.2px;top:171.1px;font-size:19px;color:#f0f0f0;transform:scaleX(0.585);">0.47</div>
<div class="t" style="left:1159.4px;top:171.1px;font-size:19px;color:#f0f0f0;transform:scaleX(0.585);">0.25</div>
<div class="t" style="left:1207.9px;top:171.1px;font-size:19px;color:#f0f0f0;transform:scaleX(0.585);">0.27</div>
<div class="t" style="left:1242.9px;top:171.1px;font-size:19px;color:#f0f0f0;transform:scaleX(0.585);">0.33</div>
<div class="t" style="left:1295.7px;top:171.1px;font-size:19px;color:#f0f0f0;transform:scaleX(0.585);">0.60</div>
<div class="t" style="left:1359.9px;top:171.1px;font-size:19px;color:#f0f0f0;transform:scaleX(0.585);">0.06</div>
<div class="t" style="left:12.0px;top:203.3px;font-size:19px;color:#f0f0f0;transform:scaleX(0.596);">Target Y</div>
<div class="t" style="left:91.7px;top:203.3px;font-size:19px;color:#f0f0f0;transform:scaleX(0.585);">349.38</div>
<div class="t" style="left:132.5px;top:203.3px;font-size:19px;color:#f0f0f0;transform:scaleX(0.585);">276.46</div>
<div class="t" style="left:175.2px;top:203.3px;font-size:19px;color:#f0f0f0;transform:scaleX(0.585);">222.76</div>
<div class="t" style="left:217.8px;top:203.3px;font-size:19px;color:#f0f0f0;transform:scaleX(0.585);">171.55</div>
<div class="t" style="left:260.5px;top:203.3px;font-size:19px;color:#f0f0f0;transform:scaleX(0.585);">119.46</div>
<div class="t" style="left:302.8px;top:203.3px;font-size:19px;color:#f0f0f0;transform:scaleX(0.585);">0.00</div>
<div class="t" style="left:333.8px;top:203.3px;font-size:19px;color:#f0f0f0;transform:scaleX(0.585);">35.19</div>
<div class="t" style="left:384.4px;top:203.3px;font-size:19px;color:#f0f0f0;transform:scaleX(0.585);">121.92</div>
<div class="t" style="left:435.8px;top:203.3px;font-size:19px;color:#f0f0f0;transform:scaleX(0.585);">65.33</div>
<div class="t" style="left:481.8px;top:203.3px;font-size:19px;color:#f0f0f0;transform:scaleX(0.585);">45.53</div>
<div class="t" style="left:521.5px;top:203.3px;font-size:19px;color:#f0f0f0;transform:scaleX(0.585);">81.47</div>
<div class="t" style="left:583.9px;top:203.3px;font-size:19px;color:#f0f0f0;transform:scaleX(0.585);">146.30</div>
<div class="t" style="left:650.2px;top:203.3px;font-size:19px;color:#f0f0f0;transform:scaleX(0.585);">99.04</div>
<div class="t" style="left:690.9px;top:203.3px;font-size:19px;color:#f0f0f0;transform:scaleX(0.585);">41.07</div>
<div class="t" style="left:759.5px;top:203.3px;font-size:19px;color:#f0f0f0;transform:scaleX(0.585);">65.25</div>
<div class="t" style="left:833.8px;top:203.3px;font-size:19px;color:#f0f0f0;transform:scaleX(0.585);">23.32</div>
<div class="t" style="left:870.6px;top:203.3px;font-size:19px;color:#f0f0f0;transform:scaleX(0.585);">149.38</div>
<div class="t" style="left:939.2px;top:203.3px;font-size:19px;color:#f0f0f0;transform:scaleX(0.585);">148.53</div>
<div class="t" style="left:1013.6px;top:203.3px;font-size:19px;color:#f0f0f0;transform:scaleX(0.585);">21.81</div>
<div class="t" style="left:1048.2px;top:203.3px;font-size:19px;color:#f0f0f0;transform:scaleX(0.585);">80.26</div>
<div class="t" style="left:1083.6px;top:203.3px;font-size:19px;color:#f0f0f0;transform:scaleX(0.585);">40.74</div>
<div class="t" style="left:1118.2px;top:203.3px;font-size:19px;color:#f0f0f0;transform:scaleX(0.585);">206.01</div>
<div class="t" style="left:1159.4px;top:203.3px;font-size:19px;color:#f0f0f0;transform:scaleX(0.585);">65.77</div>
<div class="t" style="left:1207.9px;top:203.3px;font-size:19px;color:#f0f0f0;transform:scaleX(0.585);">67.84</div>
<div class="t" style="left:1242.9px;top:203.3px;font-size:19px;color:#f0f0f0;transform:scaleX(0.585);">74.30</div>
<div class="t" style="left:1295.7px;top:203.3px;font-size:19px;color:#f0f0f0;transform:scaleX(0.585);">249.86</div>
<div class="t" style="left:1359.9px;top:203.3px;font-size:19px;color:#f0f0f0;transform:scaleX(0.585);">25.22</div>
<div class="t" style="left:12.0px;top:235.4px;font-size:19px;color:#f0f0f0;transform:scaleX(0.586);">ΔE 2000</div>
<div class="t" style="left:91.7px;top:235.4px;font-size:19px;color:#f0f0f0;transform:scaleX(0.585);">6.68</div>
<div class="t" style="left:132.5px;top:235.4px;font-size:19px;color:#f0f0f0;transform:scaleX(0.585);">5.81</div>
<div class="t" style="left:175.2px;top:235.4px;font-size:19px;color:#f0f0f0;transform:scaleX(0.585);">5.38</div>
<div class="t" style="left:217.8px;top:235.4px;font-size:19px;color:#f0f0f0;transform:scaleX(0.585);">4.99</div>
<div class="t" style="left:260.5px;top:235.4px;font-size:19px;color:#f0f0f0;transform:scaleX(0.585);">4.57</div>
<div class="t" style="left:302.8px;top:235.4px;font-size:19px;color:#f0f0f0;transform:scaleX(0.585);">1.04</div>
<div class="t" style="left:333.8px;top:235.4px;font-size:19px;color:#f0f0f0;transform:scaleX(0.585);">1.56</div>
<div class="t" style="left:384.4px;top:235.4px;font-size:19px;color:#f0f0f0;transform:scaleX(0.585);">2.99</div>
<div class="t" style="left:435.8px;top:235.4px;font-size:19px;color:#f0f0f0;transform:scaleX(0.585);">4.25</div>
<div class="t" style="left:481.8px;top:235.4px;font-size:19px;color:#f0f0f0;transform:scaleX(0.585);">0.99</div>
<div class="t" style="left:521.5px;top:235.4px;font-size:19px;color:#f0f0f0;transform:scaleX(0.585);">3.44</div>
<div class="t" style="left:583.9px;top:235.4px;font-size:19px;color:#f0f0f0;transform:scaleX(0.585);">3.51</div>
<div class="t" style="left:650.2px;top:235.4px;font-size:19px;color:#f0f0f0;transform:scaleX(0.585);">7.09</div>
<div class="t" style="left:690.9px;top:235.4px;font-size:19px;color:#f0f0f0;transform:scaleX(0.585);">3.19</div>
<div class="t" style="left:759.5px;top:235.4px;font-size:19px;color:#f0f0f0;transform:scaleX(0.585);">2.90</div>
<div class="t" style="left:833.8px;top:235.4px;font-size:19px;color:#f0f0f0;transform:scaleX(0.585);">5.32</div>
<div class="t" style="left:870.6px;top:235.4px;font-size:19px;color:#f0f0f0;transform:scaleX(0.585);">2.69</div>
<div class="t" style="left:939.2px;top:235.4px;font-size:19px;color:#f0f0f0;transform:scaleX(0.585);">6.28</div>
<div class="t" style="left:1013.6px;top:235.4px;font-size:19px;color:#f0f0f0;transform:scaleX(0.585);">2.91</div>
<div class="t" style="left:1048.2px;top:235.4px;font-size:19px;color:#f0f0f0;transform:scaleX(0.585);">2.38</div>
<div class="t" style="left:1083.6px;top:235.4px;font-size:19px;color:#f0f0f0;transform:scaleX(0.585);">1.63</div>
<div class="t" style="left:1118.2px;top:235.4px;font-size:19px;color:#f0f0f0;transform:scaleX(0.585);">4.95</div>
<div class="t" style="left:1159.4px;top:235.4px;font-size:19px;color:#f0f0f0;transform:scaleX(0.585);">4.20</div>
<div class="t" style="left:1207.9px;top:235.4px;font-size:19px;color:#f0f0f0;transform:scaleX(0.585);">5.21</div>
<div class="t" style="left:1242.9px;top:235.4px;font-size:19px;color:#f0f0f0;transform:scaleX(0.585);">7.68</div>
<div class="t" style="left:1295.7px;top:235.4px;font-size:19px;color:#f0f0f0;transform:scaleX(0.585);">5.56</div>
<div class="t" style="left:1359.9px;top:235.4px;font-size:19px;color:#f0f0f0;transform:scaleX(0.585);">3.56</div>
<div style="position:absolute;left:9px;top:260.200px;width:1379px;height:21px;background:#636363"></div>
<div style="position:absolute;left:10px;top:262.500px;width:11px;height:16.500px;border-radius:3px;background:linear-gradient(#999,#777)"></div>
<div style="position:absolute;left:1375px;top:262.500px;width:11px;height:16.500px;border-radius:3px;background:linear-gradient(#999,#777)"></div>
<svg style="position:absolute;left:0;top:262px" width="1388" height="17"><path d="M18.500 5V14L13.500 9.500Z M1378 5V14L1383 9.500Z" fill="#444"/></svg>
<div style="position:absolute;left:22.500px;top:262.300px;width:817px;height:17.200px;border-radius:8px;background:#4b4b4b"></div>
</div>
<div style="position:absolute;left:200px;top:1102px;width:1720px;height:68px;background:#333"></div>
<div style="position:absolute;left:200px;top:1100px;width:1397px;height:70px;overflow:hidden">
<div style="position:absolute;left:1.2px;top:8px;width:49.8px;height:48.3px;border-radius:5px 5px 0 0;background:linear-gradient(#a6a6a6,#8c8c8c 40%,#646464)"></div>
<div style="position:absolute;left:6.2px;top:13.4px;width:40px;height:23.8px;border-radius:4px;background:#ffffff;box-shadow:0 0 1.5px .5px rgba(70,70,70,.7)"></div>
<div class="t" style="left:11.6px;top:42.7px;font-size:10.5px;color:#2c2c2c;font-weight:bold;transform:scaleX(1.020);">White</div>
<div style="position:absolute;left:53.2px;top:8px;width:49.8px;height:48.3px;border-radius:5px 5px 0 0;background:linear-gradient(#a6a6a6,#8c8c8c 40%,#646464)"></div>
<div style="position:absolute;left:58.2px;top:13.4px;width:40px;height:23.8px;border-radius:4px;background:#e6e6e6;box-shadow:0 0 1.5px .5px rgba(70,70,70,.7)"></div>
<div class="t" style="left:58.6px;top:42.7px;font-size:10.5px;color:#2c2c2c;font-weight:bold;transform:scaleX(1.020);">Gray 80</div>
<div style="position:absolute;left:105.2px;top:8px;width:49.8px;height:48.3px;border-radius:5px 5px 0 0;background:linear-gradient(#a6a6a6,#8c8c8c 40%,#646464)"></div>
<div style="position:absolute;left:110.2px;top:13.4px;width:40px;height:23.8px;border-radius:4px;background:#d2d2d2;box-shadow:0 0 1.5px .5px rgba(70,70,70,.7)"></div>
<div class="t" style="left:110.6px;top:42.7px;font-size:10.5px;color:#2c2c2c;font-weight:bold;transform:scaleX(1.020);">Gray 65</div>
<div style="position:absolute;left:157.2px;top:8px;width:49.8px;height:48.3px;border-radius:5px 5px 0 0;background:linear-gradient(#a6a6a6,#8c8c8c 40%,#646464)"></div>
<div style="position:absolute;left:162.2px;top:13.4px;width:40px;height:23.8px;border-radius:4px;background:#bababa;box-shadow:0 0 1.5px .5px rgba(70,70,70,.7)"></div>
<div class="t" style="left:162.6px;top:42.7px;font-size:10.5px;color:#2c2c2c;font-weight:bold;transform:scaleX(1.020);">Gray 50</div>
<div style="position:absolute;left:209.2px;top:8px;width:49.8px;height:48.3px;border-radius:5px 5px 0 0;background:linear-gradient(#a6a6a6,#8c8c8c 40%,#646464)"></div>
<div style="position:absolute;left:214.2px;top:13.4px;width:40px;height:23.8px;border-radius:4px;background:#a0a0a0;box-shadow:0 0 1.5px .5px rgba(70,70,70,.7)"></div>
<div class="t" style="left:214.6px;top:42.7px;font-size:10.5px;color:#2c2c2c;font-weight:bold;transform:scaleX(1.020);">Gray 35</div>
<div style="position:absolute;left:261.2px;top:8px;width:49.8px;height:48.3px;border-radius:5px 5px 0 0;background:linear-gradient(#a6a6a6,#8c8c8c 40%,#646464)"></div>
<div style="position:absolute;left:266.2px;top:13.4px;width:40px;height:23.8px;border-radius:4px;background:#000000;box-shadow:0 0 1.5px .5px rgba(70,70,70,.7)"></div>
<div class="t" style="left:271.9px;top:42.7px;font-size:10.5px;color:#2c2c2c;font-weight:bold;transform:scaleX(1.020);">Black</div>
<div style="position:absolute;left:313.2px;top:8px;width:49.8px;height:48.3px;border-radius:5px 5px 0 0;background:linear-gradient(#a6a6a6,#8c8c8c 40%,#646464)"></div>
<div style="position:absolute;left:318.2px;top:13.4px;width:40px;height:23.8px;border-radius:4px;background:#735244;box-shadow:0 0 1.5px .5px rgba(70,70,70,.7)"></div>
<div class="t" style="left:313.7px;top:42.7px;font-size:10.5px;color:#2c2c2c;font-weight:bold;transform:scaleX(1.012);">Dark Skin</div>
<div style="position:absolute;left:365.2px;top:8px;width:49.8px;height:48.3px;border-radius:5px 5px 0 0;background:linear-gradient(#a6a6a6,#8c8c8c 40%,#646464)"></div>
<div style="position:absolute;left:370.2px;top:13.4px;width:40px;height:23.8px;border-radius:4px;background:#c29682;box-shadow:0 0 1.5px .5px rgba(70,70,70,.7)"></div>
<div class="t" style="left:365.7px;top:42.7px;font-size:10.5px;color:#2c2c2c;font-weight:bold;transform:scaleX(0.966);">Light Skin</div>
<div style="position:absolute;left:417.2px;top:8px;width:49.8px;height:48.3px;border-radius:5px 5px 0 0;background:linear-gradient(#a6a6a6,#8c8c8c 40%,#646464)"></div>
<div style="position:absolute;left:422.2px;top:13.4px;width:40px;height:23.8px;border-radius:4px;background:#5e7ca4;box-shadow:0 0 1.5px .5px rgba(70,70,70,.7)"></div>
<div class="t" style="left:419.6px;top:42.7px;font-size:10.5px;color:#2c2c2c;font-weight:bold;transform:scaleX(1.020);">Blue Sky</div>
<div style="position:absolute;left:469.2px;top:8px;width:49.8px;height:48.3px;border-radius:5px 5px 0 0;background:linear-gradient(#a6a6a6,#8c8c8c 40%,#646464)"></div>
<div style="position:absolute;left:474.2px;top:13.4px;width:40px;height:23.8px;border-radius:4px;background:#576c43;box-shadow:0 0 1.5px .5px rgba(70,70,70,.7)"></div>
<div class="t" style="left:475.5px;top:42.7px;font-size:10.5px;color:#2c2c2c;font-weight:bold;transform:scaleX(1.020);">Foliage</div>
<div style="position:absolute;left:521.2px;top:8px;width:49.8px;height:48.3px;border-radius:5px 5px 0 0;background:linear-gradient(#a6a6a6,#8c8c8c 40%,#646464)"></div>
<div style="position:absolute;left:526.2px;top:13.4px;width:40px;height:11.3px;border-radius:4px;background:#8580b1;box-shadow:0 0 1.5px .5px rgba(70,70,70,.7)"></div>
<div class="t" style="left:529.3px;top:30.8px;font-size:10.5px;color:#2c2c2c;font-weight:bold;">Blue</div>
<div class="t" style="left:529.3px;top:42.7px;font-size:10.5px;color:#2c2c2c;font-weight:bold;">Flower</div>
<div style="position:absolute;left:573.2px;top:8px;width:49.8px;height:48.3px;border-radius:5px 5px 0 0;background:linear-gradient(#a6a6a6,#8c8c8c 40%,#646464)"></div>
<div style="position:absolute;left:578.2px;top:13.4px;width:40px;height:11.3px;border-radius:4px;background:#67bdaa;box-shadow:0 0 1.5px .5px rgba(70,70,70,.7)"></div>
<div class="t" style="left:582.2px;top:30.8px;font-size:10.5px;color:#2c2c2c;font-weight:bold;">Bluish</div>
<div class="t" style="left:582.2px;top:42.7px;font-size:10.5px;color:#2c2c2c;font-weight:bold;">Green</div>
<div style="position:absolute;left:625.2px;top:8px;width:49.8px;height:48.3px;border-radius:5px 5px 0 0;background:linear-gradient(#a6a6a6,#8c8c8c 40%,#646464)"></div>
<div style="position:absolute;left:630.2px;top:13.4px;width:40px;height:23.8px;border-radius:4px;background:#d97b2b;box-shadow:0 0 1.5px .5px rgba(70,70,70,.7)"></div>
<div class="t" style="left:631.5px;top:42.7px;font-size:10.5px;color:#2c2c2c;font-weight:bold;transform:scaleX(1.020);">Orange</div>
<div style="position:absolute;left:677.2px;top:8px;width:49.8px;height:48.3px;border-radius:5px 5px 0 0;background:linear-gradient(#a6a6a6,#8c8c8c 40%,#646464)"></div>
<div style="position:absolute;left:682.2px;top:13.4px;width:40px;height:11.3px;border-radius:4px;background:#4a5cae;box-shadow:0 0 1.5px .5px rgba(70,70,70,.7)"></div>
<div class="t" style="left:681.2px;top:30.8px;font-size:10.5px;color:#2c2c2c;font-weight:bold;">Purplish</div>
<div class="t" style="left:681.2px;top:42.7px;font-size:10.5px;color:#2c2c2c;font-weight:bold;">Blue</div>
<div style="position:absolute;left:729.2px;top:8px;width:49.8px;height:48.3px;border-radius:5px 5px 0 0;background:linear-gradient(#a6a6a6,#8c8c8c 40%,#646464)"></div>
<div style="position:absolute;left:734.2px;top:13.4px;width:40px;height:11.3px;border-radius:4px;background:#c9555f;box-shadow:0 0 1.5px .5px rgba(70,70,70,.7)"></div>
<div class="t" style="left:730.9px;top:30.8px;font-size:10.5px;color:#2c2c2c;font-weight:bold;">Moderate</div>
<div class="t" style="left:730.9px;top:42.7px;font-size:10.5px;color:#2c2c2c;font-weight:bold;">Red</div>
<div style="position:absolute;left:781.2px;top:8px;width:49.8px;height:48.3px;border-radius:5px 5px 0 0;background:linear-gradient(#a6a6a6,#8c8c8c 40%,#646464)"></div>
<div style="position:absolute;left:786.2px;top:13.4px;width:40px;height:23.8px;border-radius:4px;background:#5e3c6c;box-shadow:0 0 1.5px .5px rgba(70,70,70,.7)"></div>
<div class="t" style="left:789.5px;top:42.7px;font-size:10.5px;color:#2c2c2c;font-weight:bold;transform:scaleX(1.020);">Purple</div>
<div style="position:absolute;left:833.2px;top:8px;width:49.8px;height:48.3px;border-radius:5px 5px 0 0;background:linear-gradient(#a6a6a6,#8c8c8c 40%,#646464)"></div>
<div style="position:absolute;left:838.2px;top:13.4px;width:40px;height:11.3px;border-radius:4px;background:#a2c245;box-shadow:0 0 1.5px .5px rgba(70,70,70,.7)"></div>
<div class="t" style="left:841.9px;top:30.8px;font-size:10.5px;color:#2c2c2c;font-weight:bold;">Yellow</div>
<div class="t" style="left:841.9px;top:42.7px;font-size:10.5px;color:#2c2c2c;font-weight:bold;">Green</div>
<div style="position:absolute;left:885.2px;top:8px;width:49.8px;height:48.3px;border-radius:5px 5px 0 0;background:linear-gradient(#a6a6a6,#8c8c8c 40%,#646464)"></div>
<div style="position:absolute;left:890.2px;top:13.4px;width:40px;height:11.3px;border-radius:4px;background:#e8a32e;box-shadow:0 0 1.5px .5px rgba(70,70,70,.7)"></div>
<div class="t" style="left:891.8px;top:30.8px;font-size:10.5px;color:#2c2c2c;font-weight:bold;">Orange</div>
<div class="t" style="left:891.8px;top:42.7px;font-size:10.5px;color:#2c2c2c;font-weight:bold;">Yellow</div>
<div style="position:absolute;left:937.2px;top:8px;width:49.8px;height:48.3px;border-radius:5px 5px 0 0;background:linear-gradient(#a6a6a6,#8c8c8c 40%,#646464)"></div>
<div style="position:absolute;left:942.2px;top:13.4px;width:40px;height:23.8px;border-radius:4px;background:#30389c;box-shadow:0 0 1.5px .5px rgba(70,70,70,.7)"></div>
<div class="t" style="left:950.6px;top:42.7px;font-size:10.5px;color:#2c2c2c;font-weight:bold;transform:scaleX(1.020);">Blue</div>
<div style="position:absolute;left:989.2px;top:8px;width:49.8px;height:48.3px;border-radius:5px 5px 0 0;background:linear-gradient(#a6a6a6,#8c8c8c 40%,#646464)"></div>
<div style="position:absolute;left:994.2px;top:13.4px;width:40px;height:23.8px;border-radius:4px;background:#469449;box-shadow:0 0 1.5px .5px rgba(70,70,70,.7)"></div>
<div class="t" style="left:998.7px;top:42.7px;font-size:10.5px;color:#2c2c2c;font-weight:bold;transform:scaleX(1.020);">Green</div>
<div style="position:absolute;left:1041.2px;top:8px;width:49.8px;height:48.3px;border-radius:5px 5px 0 0;background:linear-gradient(#a6a6a6,#8c8c8c 40%,#646464)"></div>
<div style="position:absolute;left:1046.2px;top:13.4px;width:40px;height:23.8px;border-radius:4px;background:#b0303a;box-shadow:0 0 1.5px .5px rgba(70,70,70,.7)"></div>
<div class="t" style="left:1056.1px;top:42.7px;font-size:10.5px;color:#2c2c2c;font-weight:bold;transform:scaleX(1.020);">Red</div>
<div style="position:absolute;left:1093.2px;top:8px;width:49.8px;height:48.3px;border-radius:5px 5px 0 0;background:linear-gradient(#a6a6a6,#8c8c8c 40%,#646464)"></div>
<div style="position:absolute;left:1098.2px;top:13.4px;width:40px;height:23.8px;border-radius:4px;background:#eec825;box-shadow:0 0 1.5px .5px rgba(70,70,70,.7)"></div>
<div class="t" style="left:1101.5px;top:42.7px;font-size:10.5px;color:#2c2c2c;font-weight:bold;transform:scaleX(1.020);">Yellow</div>
<div style="position:absolute;left:1145.2px;top:8px;width:49.8px;height:48.3px;border-radius:5px 5px 0 0;background:linear-gradient(#a6a6a6,#8c8c8c 40%,#646464)"></div>
<div style="position:absolute;left:1150.2px;top:13.4px;width:40px;height:23.8px;border-radius:4px;background:#bb5695;box-shadow:0 0 1.5px .5px rgba(70,70,70,.7)"></div>
<div class="t" style="left:1148.5px;top:42.7px;font-size:10.5px;color:#2c2c2c;font-weight:bold;transform:scaleX(1.020);">Magenta</div>
<div style="position:absolute;left:1197.2px;top:8px;width:49.8px;height:48.3px;border-radius:5px 5px 0 0;background:linear-gradient(#a6a6a6,#8c8c8c 40%,#646464)"></div>
<div style="position:absolute;left:1202.2px;top:13.4px;width:40px;height:23.8px;border-radius:4px;background:#0a8aa6;box-shadow:0 0 1.5px .5px rgba(70,70,70,.7)"></div>
<div class="t" style="left:1209.1px;top:42.7px;font-size:10.5px;color:#2c2c2c;font-weight:bold;transform:scaleX(1.020);">Cyan</div>
<div style="position:absolute;left:1249.2px;top:8px;width:49.8px;height:48.3px;border-radius:5px 5px 0 0;background:linear-gradient(#a6a6a6,#8c8c8c 40%,#646464)"></div>
<div style="position:absolute;left:1254.2px;top:13.4px;width:40px;height:23.8px;border-radius:4px;background:#ff0000;box-shadow:0 0 1.5px .5px rgba(70,70,70,.7)"></div>
<div class="t" style="left:1249.7px;top:42.7px;font-size:10.5px;color:#2c2c2c;font-weight:bold;transform:scaleX(0.988);">100% Red</div>
<div style="position:absolute;left:1301.2px;top:8px;width:49.8px;height:48.3px;border-radius:5px 5px 0 0;background:linear-gradient(#a6a6a6,#8c8c8c 40%,#646464)"></div>
<div style="position:absolute;left:1306.2px;top:13.4px;width:40px;height:11.3px;border-radius:4px;background:#00ff00;box-shadow:0 0 1.5px .5px rgba(70,70,70,.7)"></div>
<div class="t" style="left:1311.0px;top:30.8px;font-size:10.5px;color:#2c2c2c;font-weight:bold;">100%</div>
<div class="t" style="left:1311.0px;top:42.7px;font-size:10.5px;color:#2c2c2c;font-weight:bold;">Green</div>
<div style="position:absolute;left:1353.2px;top:8px;width:49.8px;height:48.3px;border-radius:5px 5px 0 0;background:linear-gradient(#a6a6a6,#8c8c8c 40%,#646464)"></div>
<div style="position:absolute;left:1358.2px;top:13.4px;width:40px;height:11.3px;border-radius:4px;background:#0000ff;box-shadow:0 0 1.5px .5px rgba(70,70,70,.7)"></div>
<div class="t" style="left:1364.8px;top:30.8px;font-size:10.5px;color:#2c2c2c;font-weight:bold;">100%</div>
<div class="t" style="left:1364.8px;top:42.7px;font-size:10.5px;color:#2c2c2c;font-weight:bold;">Blue</div>
<div style="position:absolute;left:1px;top:57.5px;width:1396px;height:11px;background:#555"></div>
<div style="position:absolute;left:2px;top:58px;width:10px;height:10px;border-radius:2px;background:linear-gradient(#a0a0a0,#808080)"></div>
<div style="position:absolute;left:1385px;top:58px;width:10px;height:10px;border-radius:2px;background:linear-gradient(#a0a0a0,#808080)"></div>
<svg style="position:absolute;left:0;top:57.5px" width="1397" height="11"><path d="M9.500 2V9L4.500 5.500Z M1388 2V9L1393 5.500Z" fill="#383838"/></svg>
<div style="position:absolute;left:14.4px;top:58px;width:780px;height:10px;border-radius:5px;background:#454545"></div>
</div>
<div style="position:absolute;left:1597.3px;top:1108px;width:47.7px;height:18px;border-radius:5px 5px 0 0;background:linear-gradient(#acacac,#888)"></div>
<div style="position:absolute;left:1614.2px;top:1110.2px;width:14px;height:14px;border-radius:50%;background:linear-gradient(#848484,#a4a4a4)"></div>
<svg style="position:absolute;left:1614.2px;top:1110.2px" width="14" height="14"><path d="M3.200 8.800H10.800L7 4.800Z" fill="#333"/></svg>
<div style="position:absolute;left:1597.3px;top:1127px;width:47.7px;height:41.7px;border-radius:0 0 5px 5px;background:linear-gradient(#999,#666)"></div>
<div style="position:absolute;left:1605.2px;top:1132.5px;width:31px;height:31.2px;border-radius:5px;box-sizing:border-box;border:2px solid #262626;background:linear-gradient(#c2c2c2,#a4a4a4 49%,#8a8a8a 51%,#868686)"></div>
<div style="position:absolute;left:1614px;top:1141px;width:14px;height:13.8px;background:linear-gradient(#222 52%,#000 52%)"></div>
<div style="position:absolute;left:1646.0px;top:1108px;width:45.5px;height:30px;background:linear-gradient(#b0b0b0,#909090 45%,#6c6c6c);border-radius:5px 0 0 0"></div>
<div style="position:absolute;left:1658.8px;top:1113px;width:20px;height:20px;border-radius:50%;background:linear-gradient(#808080,#a4a4a4)"></div>
<div style="position:absolute;left:1692.5px;top:1108px;width:44.0px;height:30px;background:linear-gradient(#b0b0b0,#909090 45%,#6c6c6c);border-radius:0"></div>
<div style="position:absolute;left:1704.5px;top:1113px;width:20px;height:20px;border-radius:50%;background:linear-gradient(#808080,#a4a4a4)"></div>
<div style="position:absolute;left:1737.5px;top:1108px;width:44.0px;height:30px;background:linear-gradient(#b0b0b0,#909090 45%,#6c6c6c);border-radius:0"></div>
<div style="position:absolute;left:1749.5px;top:1113px;width:20px;height:20px;border-radius:50%;background:linear-gradient(#808080,#a4a4a4)"></div>
<div style="position:absolute;left:1782.5px;top:1108px;width:44.0px;height:30px;background:linear-gradient(#b0b0b0,#909090 45%,#6c6c6c);border-radius:0"></div>
<div style="position:absolute;left:1794.5px;top:1113px;width:20px;height:20px;border-radius:50%;background:linear-gradient(#808080,#a4a4a4)"></div>
<div style="position:absolute;left:1827.5px;top:1108px;width:44.0px;height:30px;background:linear-gradient(#3c3c3c,#2a2a2a);border-radius:0"></div>
<div style="position:absolute;left:1839.5px;top:1113px;width:20px;height:20px;border-radius:50%;background:linear-gradient(#242424,#343434)"></div>
<div style="position:absolute;left:1872.5px;top:1108px;width:44.5px;height:30px;background:linear-gradient(#3c3c3c,#2a2a2a);border-radius:0 5px 0 0"></div>
<div style="position:absolute;left:1884.8px;top:1113px;width:20px;height:20px;border-radius:50%;background:linear-gradient(#242424,#343434)"></div>
<svg style="position:absolute;left:1646px;top:1108px" width="272" height="30"><rect x="19" y="11.200" width="7.800" height="7.800" fill="#333"/><path d="M65 10.300V20L73.500 15.100Z" fill="#303030"/><path d="M110.200 10.500H108.200V19.700H110.200M117.200 10.500H119.200V19.700H117.200" stroke="#303030" stroke-width="1.6" fill="none"/><path d="M111.200 15.100h1.600M114.700 15.100h1.600" stroke="#303030" stroke-width="1.700"/><path d="M158.500 15c-1.500-3.200-6.200-3.200-6.200 0s4.700 3.200 6.200 0s4.700-3.200 6.200 0s-4.700 3.200-6.200 0" stroke="#303030" stroke-width="1.500" fill="none"/><path d="M199 13.500a5 5 0 0 1 9-1.500M209 16.500a5 5 0 0 1 -9 1.500" stroke="#1c1c1c" stroke-width="2" fill="none"/><path d="M209.500 9v4h-4ZM198.500 21v-4h4Z" fill="#1c1c1c"/></svg>
<div style="position:absolute;left:1646px;top:1139.2px;width:136px;height:29.6px;border-radius:0 0 0 5px;background:linear-gradient(#b8b8b8,#9a9a9a 40%,#707070)"></div>
<div style="position:absolute;left:1783px;top:1139.2px;width:134.5px;height:29.6px;border-radius:0 0 5px 0;background:linear-gradient(#b8b8b8,#9a9a9a 40%,#707070)"></div>
<div style="position:absolute;left:1666.9px;top:1143.8px;width:20px;height:20px;border-radius:50%;background:linear-gradient(#7c7c7c,#a6a6a6)"></div>
<div style="position:absolute;left:1880.0px;top:1143.8px;width:20px;height:20px;border-radius:50%;background:linear-gradient(#7c7c7c,#a6a6a6)"></div>
<svg style="position:absolute;left:1646px;top:1139px" width="272" height="30"><g stroke="#2c2c2c" stroke-width="1.500" fill="none"><path d="M30.400 10.800l-4 4l4 4M34.600 10.800l-4 4l4 4"/><path d="M240.400 10.800l4 4l-4 4M244.600 10.800l4 4l-4 4"/></g></svg>
<div class="t" style="left:1703.8px;top:1144.1px;font-size:21.3px;color:#2c2c2c;transform:scaleX(1.062);text-shadow:0 0 .8px #2c2c2c;">Back</div>
<div class="t" style="left:1810.3px;top:1144.1px;font-size:21.3px;color:#2c2c2c;transform:scaleX(1.178);text-shadow:0 0 .8px #2c2c2c;">Next</div>
</body></html>
